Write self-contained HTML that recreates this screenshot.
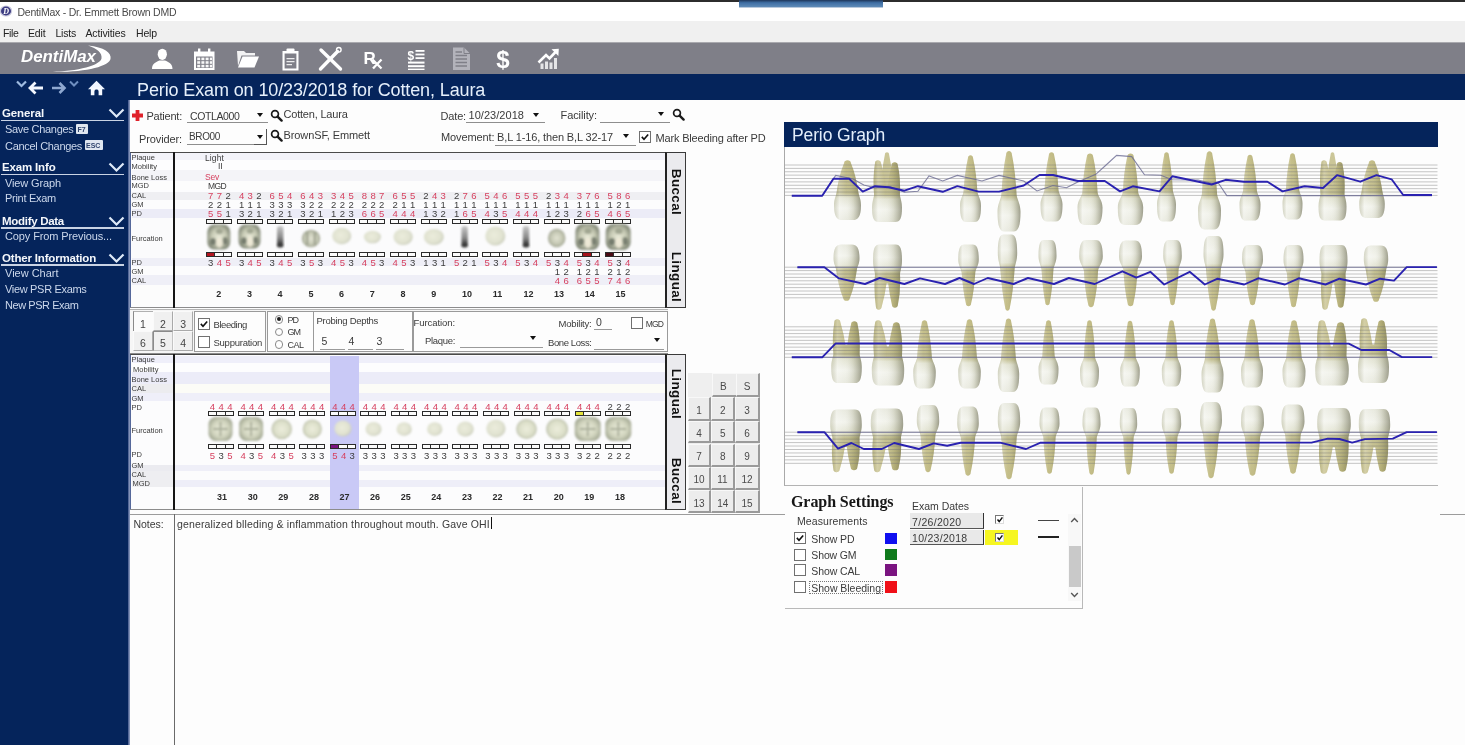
<!DOCTYPE html>
<html><head><meta charset="utf-8"><title>DentiMax - Perio Exam</title>
<style>
html,body{margin:0;padding:0;}
body{width:1465px;height:745px;overflow:hidden;background:#fff;font-family:"Liberation Sans",sans-serif;}
#wrap{position:absolute;left:-12px;top:-12px;width:1489px;height:769px;background:#fdfdfd;filter:blur(0.5px);}
.bleed{position:absolute;left:0;width:1489px;}
#app{position:absolute;left:12px;top:12px;width:1465px;height:745px;background:#fdfdfd;}
.a{position:absolute;}
.t{position:absolute;white-space:nowrap;}
.cb{position:absolute;width:11px;height:11px;border:1px solid #707070;background:#fff;box-sizing:content-box;}
.ul{position:absolute;height:1px;background:#8a8a8a;}
.gb{position:absolute;border:1px solid #9a9a9a;box-sizing:border-box;background:#fdfdfd;}
.arrow{position:absolute;width:0;height:0;border-left:3.5px solid transparent;border-right:3.5px solid transparent;border-top:4px solid #111;}
.nb{position:absolute;box-sizing:border-box;background:#ececec;border-right:2px solid #9a9a9a;border-bottom:2px solid #9a9a9a;border-top:1px solid #f8f8f8;border-left:1px solid #f8f8f8;}
</style></head><body><div id="wrap"><div class="bleed" style="top:0;height:14px;background:#2c2c2c"></div><div class="bleed" style="top:33px;height:22px;background:#f0f0f0"></div><div class="bleed" style="top:54px;height:32px;background:#7f7f88"></div><div class="bleed" style="top:86px;height:26px;background:#05245b"></div><div class="bleed" style="top:112px;height:657px;width:140px;background:#05245b"></div><div id="app">

<div class="a" id="titlebar" style="left:0;top:0;width:1465px;height:22px;background:#fff;"></div>
<div class="a" style="left:0;top:0;width:1465px;height:2px;background:#2c2c2c;"></div>
<div class="a" style="left:739px;top:0;width:144px;height:7px;background:linear-gradient(#1d3558 0%,#3f6fa5 40%,#5f8bb7 100%);border-bottom:1px solid #b9c9dc;"></div>
<div class="a" id="menubar" style="left:0;top:21px;width:1465px;height:22px;background:#f0f0f0;"></div>
<div class="a" id="toolbar" style="left:0;top:42px;width:1465px;height:32px;background:#7f7f88;border-top:1px solid #a9a9ae;box-sizing:border-box;"></div>
<div class="a" id="navband" style="left:0;top:74px;width:1465px;height:26px;background:#05245b;"></div>
<div class="a" id="sidebar" style="left:0;top:100px;width:128px;height:645px;background:#05245b;"></div>
<div class="a" id="content" style="left:128px;top:100px;width:1337px;height:645px;background:#fdfdfd;"></div>

<svg class="a" style="left:0;top:4px" width="13" height="14" viewBox="0 0 13 14"><ellipse cx="6" cy="7" rx="6.2" ry="5.6" fill="#c9c9dc"/><ellipse cx="6" cy="7" rx="5" ry="4.4" fill="#3c3c82"/><text x="6.2" y="10" font-size="8" font-weight="bold" font-style="italic" fill="#fff" text-anchor="middle" font-family="Liberation Serif">D</text></svg>
<div class="a" style="left:1px;top:119.7px;width:123px;height:1.5px;background:#c9d3e4;"></div>
<svg class="a" style="left:108px;top:107.2px" width="17" height="12" viewBox="0 0 17 12"><path d="M1.5 2.5 L8.5 9.5 L15.5 2.5" fill="none" stroke="#dfeaf8" stroke-width="2.2"/></svg>
<div class="a" style="left:76px;top:123.5px;width:12px;height:10px;background:#dfe6f0;border-radius:1px;"></div>
<div class="a" style="left:84.5px;top:140px;width:18px;height:10px;background:#dfe6f0;border-radius:1px;"></div>
<div class="a" style="left:1px;top:173.8px;width:123px;height:1.5px;background:#c9d3e4;"></div>
<svg class="a" style="left:108px;top:161.3px" width="17" height="12" viewBox="0 0 17 12"><path d="M1.5 2.5 L8.5 9.5 L15.5 2.5" fill="none" stroke="#dfeaf8" stroke-width="2.2"/></svg>
<div class="a" style="left:1px;top:227.0px;width:123px;height:1.5px;background:#c9d3e4;"></div>
<svg class="a" style="left:108px;top:214.5px" width="17" height="12" viewBox="0 0 17 12"><path d="M1.5 2.5 L8.5 9.5 L15.5 2.5" fill="none" stroke="#dfeaf8" stroke-width="2.2"/></svg>
<div class="a" style="left:1px;top:264.3px;width:123px;height:1.5px;background:#c9d3e4;"></div>
<svg class="a" style="left:108px;top:251.8px" width="17" height="12" viewBox="0 0 17 12"><path d="M1.5 2.5 L8.5 9.5 L15.5 2.5" fill="none" stroke="#dfeaf8" stroke-width="2.2"/></svg>
<svg class="a" style="left:14px;top:78px" width="100" height="22" viewBox="0 0 100 22">
<path d="M3 3.5 L7.5 8 L12 3.5" fill="none" stroke="#9fbbe0" stroke-width="2.2"/>
<path d="M29 10 H16.5 M21.5 4.5 L16 10 L21.5 15.5" fill="none" stroke="#f4f8ff" stroke-width="2.8"/>
<path d="M38 10 H50 M45.5 5 L50.5 10 L45.5 15" fill="none" stroke="#8fa8d0" stroke-width="2.6"/>
<path d="M56 3.5 L60 7.5 L64 3.5" fill="none" stroke="#6f8fc0" stroke-width="2"/>
<path d="M74 11.2 L82.5 2.8 L91 11.2 Z" fill="#eef4ff"/>
<path d="M76.8 9.5 H88.2 V17.2 H84.6 V13.4 a2.1 2.1 0 0 0 -4.2 0 V17.2 H76.8 Z" fill="#f6f9ff"/>
</svg>
<svg class="a" id="logo" style="left:15px;top:43px" width="105" height="31" viewBox="15 43 105 31">
<path d="M88 45.5 C104 47 112 53 110.5 59 C109 66.5 84 73 48 71.8 C80 71.5 100 65 101.5 58.5 C102.5 53 97 48.5 88 45.5 Z" fill="#fff"/>
<text x="21" y="62.3" font-family="Liberation Sans" font-weight="bold" font-style="italic" font-size="16.5" fill="#fff" textLength="75" lengthAdjust="spacingAndGlyphs">DentiMax</text>
</svg>
<svg class="a" id="tbicons" style="left:140px;top:43px" width="430" height="31" viewBox="140 43 430 31">
<g fill="#fff" stroke="none">
<!-- person -->
<ellipse cx="162.3" cy="54.3" rx="4.6" ry="5.6"/>
<path d="M152 69 C152 63.5 156 62 159.5 60.5 L165 60.5 C168.5 62 172.5 63.5 172.5 69 Z"/>
<!-- calendar -->
<path d="M194 51.5 H214.5 V70 H194 Z M196 56.5 V68 H212.5 V56.5 Z" fill-rule="evenodd"/>
<rect x="198" y="48.5" width="2.4" height="5"/><rect x="208" y="48.5" width="2.4" height="5"/>
<g opacity="0.95"><rect x="197.2" y="57.6" width="3" height="2.6"/><rect x="201.4" y="57.6" width="3" height="2.6"/><rect x="205.6" y="57.6" width="3" height="2.6"/><rect x="209.8" y="57.6" width="2.2" height="2.6"/>
<rect x="197.2" y="61.2" width="3" height="2.6"/><rect x="201.4" y="61.2" width="3" height="2.6"/><rect x="205.6" y="61.2" width="3" height="2.6"/><rect x="209.8" y="61.2" width="2.2" height="2.6"/>
<rect x="197.2" y="64.8" width="3" height="2.6"/><rect x="201.4" y="64.8" width="3" height="2.6"/><rect x="205.6" y="64.8" width="3" height="2.6"/><rect x="209.8" y="64.8" width="2.2" height="2.6"/></g>
<!-- folder -->
<path d="M237 51 H244 L246 53 H255 V55.5 H241.5 L238 66 Z" opacity="0.9"/>
<path d="M242.5 56.5 H259 L254.5 67.5 H238 Z"/>
<!-- clipboard -->
<path d="M282.5 51 H298.5 V70.5 H282.5 Z M284.6 53.5 V68.4 H296.4 V53.5 Z" fill-rule="evenodd"/>
<rect x="286.5" y="48.6" width="8" height="4" rx="1"/>
<path d="M286.5 58 H294.5 V59.3 H286.5 Z M286.5 61 H294.5 V62.3 H286.5 Z M286.5 64 H292 V65.3 H286.5 Z" opacity="0.85"/>
</g>
<!-- tools X -->
<g stroke="#fff" fill="none" stroke-linecap="round">
<path d="M321 50 L340.5 69" stroke-width="3.4"/>
<path d="M337.5 51.5 L320.5 69" stroke-width="3.4"/>
<circle cx="338.8" cy="49.8" r="2.3" stroke-width="1.4"/>
</g>
<!-- Rx -->
<text x="363.5" y="64" font-family="Liberation Sans" font-weight="bold" font-size="17" fill="#fff">R</text>
<path d="M372.5 59.5 L381.5 68.5 M381.5 59.5 L373 68.5" stroke="#fff" stroke-width="2.3" fill="none"/>
<!-- $ list -->
<text x="407.5" y="59.5" font-family="Liberation Sans" font-weight="bold" font-size="12" fill="#fff">$</text>
<g fill="#fff"><rect x="415.5" y="50" width="9" height="1.8"/><rect x="415.5" y="53.6" width="9" height="1.8"/><rect x="415.5" y="57.2" width="9" height="1.8"/>
<rect x="408" y="61.6" width="16.5" height="2"/><rect x="408" y="65.2" width="16.5" height="2"/><rect x="408" y="68.6" width="16.5" height="1.4"/></g>
<!-- document -->
<g opacity="0.5"><path d="M453 47.5 H464 L470 53.5 V70 H453 Z" fill="#e8e8ee"/>
<path d="M455.5 52 H462 M455.5 55.5 H467 M455.5 59 H467 M455.5 62.5 H467 M455.5 66 H467" stroke="#7f7f88" stroke-width="1.5"/><path d="M464 47.5 V53.5 H470" fill="none" stroke="#7f7f88" stroke-width="1"/></g>
<!-- dollar -->
<text x="496.3" y="68" font-family="Liberation Sans" font-weight="bold" font-size="24" fill="#fff">$</text>
<!-- chart -->
<g fill="#fff"><rect x="540.5" y="63.5" width="3" height="5.5" opacity=".8"/><rect x="545" y="61.5" width="3" height="7.5" opacity=".8"/><rect x="549.5" y="62.5" width="3" height="6.5" opacity=".8"/><rect x="554" y="58" width="3" height="11" opacity=".8"/></g>
<path d="M538.5 62.5 L546 55 L549.5 58.5 L556 51.5" fill="none" stroke="#fff" stroke-width="2.6"/>
<path d="M551.5 49.2 L558.8 48.8 L558.4 56 Z" fill="#fff"/>
</svg>
<svg class="a" style="left:131px;top:109px" width="13" height="13" viewBox="0 0 13 13"><path d="M4.6 1 H8.4 V4.6 H12 V8.4 H8.4 V12 H4.6 V8.4 H1 V4.6 H4.6 Z" fill="#e0222b"/></svg>
<div class="arrow" style="left:256.5px;top:113px;border-top-color:#111"></div>
<div class="ul" style="left:187px;top:122px;width:81px;background:#8e8e8e"></div>
<svg class="a" style="left:269.5px;top:109px" width="13" height="13" viewBox="0 0 13 13"><circle cx="5" cy="5" r="3.4" fill="#fdfdfd" stroke="#1a1a1a" stroke-width="1.7"/><path d="M7.6 7.6 L11.6 11.6" stroke="#1a1a1a" stroke-width="2.4" stroke-linecap="round"/></svg>
<div class="a" style="left:252px;top:128.5px;width:15px;height:16px;border-right:1.5px solid #555;border-bottom:1.5px solid #555;box-sizing:border-box;"></div>
<div class="arrow" style="left:256.5px;top:134.5px;border-top-color:#111"></div>
<div class="ul" style="left:187px;top:144px;width:67px;background:#8e8e8e"></div>
<svg class="a" style="left:269.5px;top:129px" width="13" height="13" viewBox="0 0 13 13"><circle cx="5" cy="5" r="3.4" fill="#fdfdfd" stroke="#1a1a1a" stroke-width="1.7"/><path d="M7.6 7.6 L11.6 11.6" stroke="#1a1a1a" stroke-width="2.4" stroke-linecap="round"/></svg>
<div class="arrow" style="left:532.5px;top:112.5px;border-top-color:#111"></div>
<div class="ul" style="left:466px;top:122px;width:79px;background:#8e8e8e"></div>
<div class="arrow" style="left:657.5px;top:112px;border-top-color:#111"></div>
<div class="ul" style="left:600px;top:122px;width:70px;background:#8e8e8e"></div>
<svg class="a" style="left:671.5px;top:108px" width="13" height="13" viewBox="0 0 13 13"><circle cx="5" cy="5" r="3.4" fill="#fdfdfd" stroke="#1a1a1a" stroke-width="1.7"/><path d="M7.6 7.6 L11.6 11.6" stroke="#1a1a1a" stroke-width="2.4" stroke-linecap="round"/></svg>
<div class="arrow" style="left:623.0px;top:134px;border-top-color:#111"></div>
<div class="ul" style="left:495px;top:144.5px;width:141px;background:#8e8e8e"></div>
<div class="cb" style="left:638.5px;top:131px;width:10px;height:10px"><svg width="10" height="10" viewBox="0 0 11 11" style="display:block"><path d="M2 5.4 L4.4 8 L9 2.8" fill="none" stroke="#111" stroke-width="1.8"/></svg></div>
<div class="a" style="left:129px;top:152px;width:537px;height:156px;background:#fcfcfe;border-top:1.5px solid #4a4a4a;border-bottom:1.5px solid #8c8c8c;border-left:2px solid #55689a;box-sizing:border-box;"></div>
<div class="a" style="left:173px;top:152px;width:2px;height:156px;background:#151515;"></div>
<div class="a" style="left:665px;top:152px;width:21px;height:156px;background:#ebebee;border:1.5px solid #3a3a3a;border-left:2px solid #222;box-sizing:border-box;"></div>
<div class="a" style="left:645.5px;top:184px;width:60px;height:16px;line-height:16px;text-align:center;font-weight:bold;font-size:13.5px;color:#111;transform:rotate(90deg);letter-spacing:0.35px;">Buccal</div>
<div class="a" style="left:645.5px;top:269px;width:60px;height:16px;line-height:16px;text-align:center;font-weight:bold;font-size:13.5px;color:#111;transform:rotate(90deg);letter-spacing:0.35px;">Lingual</div>
<div class="a" style="left:131.5px;top:153px;width:533.5px;height:7px;background:#f3f3f9"></div><div class="a" style="left:131.5px;top:160px;width:533.5px;height:10px;background:#fdfdfe"></div><div class="a" style="left:131.5px;top:170px;width:533.5px;height:11px;background:#f4f4f8"></div><div class="a" style="left:131.5px;top:181px;width:533.5px;height:9px;background:#fdfdfd"></div><div class="a" style="left:131.5px;top:192px;width:533.5px;height:8px;background:#efeff3"></div><div class="a" style="left:131.5px;top:200px;width:533.5px;height:9px;background:#fcfcfd"></div><div class="a" style="left:131.5px;top:209px;width:533.5px;height:9px;background:#ececf7"></div><div class="a" style="left:131.5px;top:218px;width:533.5px;height:40px;background:#fbfbfc"></div><div class="a" style="left:131.5px;top:258px;width:533.5px;height:8px;background:#efeff7"></div><div class="a" style="left:131.5px;top:266px;width:533.5px;height:9px;background:#fcfcfd"></div><div class="a" style="left:131.5px;top:275px;width:533.5px;height:10px;background:#efeff7"></div><div class="a" style="left:131.5px;top:285px;width:533.5px;height:21px;background:#fcfcfc"></div>
<div class="a" style="left:173px;top:152px;width:2px;height:156px;background:#151515;"></div>
<div class="a" style="left:206px;top:219px;width:26px;height:5px;background:#2b2b2b;"></div><div class="a" style="left:207px;top:220px;width:7px;height:3px;background:#fbfbfb;"></div><div class="a" style="left:215px;top:220px;width:8px;height:3px;background:#fbfbfb;"></div><div class="a" style="left:224px;top:220px;width:7px;height:3px;background:#fbfbfb;"></div>
<div class="a" style="left:206px;top:252px;width:26px;height:5px;background:#2b2b2b;"></div><div class="a" style="left:207px;top:253px;width:7px;height:3px;background:#b3141f;"></div><div class="a" style="left:215px;top:253px;width:8px;height:3px;background:#fbfbfb;"></div><div class="a" style="left:224px;top:253px;width:7px;height:3px;background:#fbfbfb;"></div>
<div class="a" style="left:237px;top:219px;width:26px;height:5px;background:#2b2b2b;"></div><div class="a" style="left:238px;top:220px;width:7px;height:3px;background:#fbfbfb;"></div><div class="a" style="left:246px;top:220px;width:8px;height:3px;background:#fbfbfb;"></div><div class="a" style="left:255px;top:220px;width:7px;height:3px;background:#fbfbfb;"></div>
<div class="a" style="left:237px;top:252px;width:26px;height:5px;background:#2b2b2b;"></div><div class="a" style="left:238px;top:253px;width:7px;height:3px;background:#fbfbfb;"></div><div class="a" style="left:246px;top:253px;width:8px;height:3px;background:#fbfbfb;"></div><div class="a" style="left:255px;top:253px;width:7px;height:3px;background:#fbfbfb;"></div>
<div class="a" style="left:267px;top:219px;width:26px;height:5px;background:#2b2b2b;"></div><div class="a" style="left:268px;top:220px;width:7px;height:3px;background:#fbfbfb;"></div><div class="a" style="left:276px;top:220px;width:8px;height:3px;background:#fbfbfb;"></div><div class="a" style="left:285px;top:220px;width:7px;height:3px;background:#fbfbfb;"></div>
<div class="a" style="left:267px;top:252px;width:26px;height:5px;background:#2b2b2b;"></div><div class="a" style="left:268px;top:253px;width:7px;height:3px;background:#fbfbfb;"></div><div class="a" style="left:276px;top:253px;width:8px;height:3px;background:#fbfbfb;"></div><div class="a" style="left:285px;top:253px;width:7px;height:3px;background:#fbfbfb;"></div>
<div class="a" style="left:298px;top:219px;width:26px;height:5px;background:#2b2b2b;"></div><div class="a" style="left:299px;top:220px;width:7px;height:3px;background:#fbfbfb;"></div><div class="a" style="left:307px;top:220px;width:8px;height:3px;background:#fbfbfb;"></div><div class="a" style="left:316px;top:220px;width:7px;height:3px;background:#fbfbfb;"></div>
<div class="a" style="left:298px;top:252px;width:26px;height:5px;background:#2b2b2b;"></div><div class="a" style="left:299px;top:253px;width:7px;height:3px;background:#fbfbfb;"></div><div class="a" style="left:307px;top:253px;width:8px;height:3px;background:#fbfbfb;"></div><div class="a" style="left:316px;top:253px;width:7px;height:3px;background:#fbfbfb;"></div>
<div class="a" style="left:329px;top:219px;width:26px;height:5px;background:#2b2b2b;"></div><div class="a" style="left:330px;top:220px;width:7px;height:3px;background:#fbfbfb;"></div><div class="a" style="left:338px;top:220px;width:8px;height:3px;background:#fbfbfb;"></div><div class="a" style="left:347px;top:220px;width:7px;height:3px;background:#fbfbfb;"></div>
<div class="a" style="left:329px;top:252px;width:26px;height:5px;background:#2b2b2b;"></div><div class="a" style="left:330px;top:253px;width:7px;height:3px;background:#fbfbfb;"></div><div class="a" style="left:338px;top:253px;width:8px;height:3px;background:#fbfbfb;"></div><div class="a" style="left:347px;top:253px;width:7px;height:3px;background:#fbfbfb;"></div>
<div class="a" style="left:359px;top:219px;width:26px;height:5px;background:#2b2b2b;"></div><div class="a" style="left:360px;top:220px;width:7px;height:3px;background:#fbfbfb;"></div><div class="a" style="left:368px;top:220px;width:8px;height:3px;background:#fbfbfb;"></div><div class="a" style="left:377px;top:220px;width:7px;height:3px;background:#fbfbfb;"></div>
<div class="a" style="left:359px;top:252px;width:26px;height:5px;background:#2b2b2b;"></div><div class="a" style="left:360px;top:253px;width:7px;height:3px;background:#fbfbfb;"></div><div class="a" style="left:368px;top:253px;width:8px;height:3px;background:#fbfbfb;"></div><div class="a" style="left:377px;top:253px;width:7px;height:3px;background:#fbfbfb;"></div>
<div class="a" style="left:390px;top:219px;width:26px;height:5px;background:#2b2b2b;"></div><div class="a" style="left:391px;top:220px;width:7px;height:3px;background:#fbfbfb;"></div><div class="a" style="left:399px;top:220px;width:8px;height:3px;background:#fbfbfb;"></div><div class="a" style="left:408px;top:220px;width:7px;height:3px;background:#fbfbfb;"></div>
<div class="a" style="left:390px;top:252px;width:26px;height:5px;background:#2b2b2b;"></div><div class="a" style="left:391px;top:253px;width:7px;height:3px;background:#fbfbfb;"></div><div class="a" style="left:399px;top:253px;width:8px;height:3px;background:#fbfbfb;"></div><div class="a" style="left:408px;top:253px;width:7px;height:3px;background:#fbfbfb;"></div>
<div class="a" style="left:421px;top:219px;width:26px;height:5px;background:#2b2b2b;"></div><div class="a" style="left:422px;top:220px;width:7px;height:3px;background:#fbfbfb;"></div><div class="a" style="left:430px;top:220px;width:8px;height:3px;background:#fbfbfb;"></div><div class="a" style="left:439px;top:220px;width:7px;height:3px;background:#fbfbfb;"></div>
<div class="a" style="left:421px;top:252px;width:26px;height:5px;background:#2b2b2b;"></div><div class="a" style="left:422px;top:253px;width:7px;height:3px;background:#fbfbfb;"></div><div class="a" style="left:430px;top:253px;width:8px;height:3px;background:#fbfbfb;"></div><div class="a" style="left:439px;top:253px;width:7px;height:3px;background:#fbfbfb;"></div>
<div class="a" style="left:452px;top:219px;width:26px;height:5px;background:#2b2b2b;"></div><div class="a" style="left:453px;top:220px;width:7px;height:3px;background:#fbfbfb;"></div><div class="a" style="left:461px;top:220px;width:8px;height:3px;background:#fbfbfb;"></div><div class="a" style="left:470px;top:220px;width:7px;height:3px;background:#fbfbfb;"></div>
<div class="a" style="left:452px;top:252px;width:26px;height:5px;background:#2b2b2b;"></div><div class="a" style="left:453px;top:253px;width:7px;height:3px;background:#fbfbfb;"></div><div class="a" style="left:461px;top:253px;width:8px;height:3px;background:#fbfbfb;"></div><div class="a" style="left:470px;top:253px;width:7px;height:3px;background:#fbfbfb;"></div>
<div class="a" style="left:482px;top:219px;width:26px;height:5px;background:#2b2b2b;"></div><div class="a" style="left:483px;top:220px;width:7px;height:3px;background:#fbfbfb;"></div><div class="a" style="left:491px;top:220px;width:8px;height:3px;background:#fbfbfb;"></div><div class="a" style="left:500px;top:220px;width:7px;height:3px;background:#fbfbfb;"></div>
<div class="a" style="left:482px;top:252px;width:26px;height:5px;background:#2b2b2b;"></div><div class="a" style="left:483px;top:253px;width:7px;height:3px;background:#fbfbfb;"></div><div class="a" style="left:491px;top:253px;width:8px;height:3px;background:#fbfbfb;"></div><div class="a" style="left:500px;top:253px;width:7px;height:3px;background:#fbfbfb;"></div>
<div class="a" style="left:513px;top:219px;width:26px;height:5px;background:#2b2b2b;"></div><div class="a" style="left:514px;top:220px;width:7px;height:3px;background:#fbfbfb;"></div><div class="a" style="left:522px;top:220px;width:8px;height:3px;background:#fbfbfb;"></div><div class="a" style="left:531px;top:220px;width:7px;height:3px;background:#fbfbfb;"></div>
<div class="a" style="left:513px;top:252px;width:26px;height:5px;background:#2b2b2b;"></div><div class="a" style="left:514px;top:253px;width:7px;height:3px;background:#fbfbfb;"></div><div class="a" style="left:522px;top:253px;width:8px;height:3px;background:#fbfbfb;"></div><div class="a" style="left:531px;top:253px;width:7px;height:3px;background:#fbfbfb;"></div>
<div class="a" style="left:544px;top:219px;width:26px;height:5px;background:#2b2b2b;"></div><div class="a" style="left:545px;top:220px;width:7px;height:3px;background:#fbfbfb;"></div><div class="a" style="left:553px;top:220px;width:8px;height:3px;background:#fbfbfb;"></div><div class="a" style="left:562px;top:220px;width:7px;height:3px;background:#fbfbfb;"></div>
<div class="a" style="left:544px;top:252px;width:26px;height:5px;background:#2b2b2b;"></div><div class="a" style="left:545px;top:253px;width:7px;height:3px;background:#fbfbfb;"></div><div class="a" style="left:553px;top:253px;width:8px;height:3px;background:#fbfbfb;"></div><div class="a" style="left:562px;top:253px;width:7px;height:3px;background:#fbfbfb;"></div>
<div class="a" style="left:574px;top:219px;width:26px;height:5px;background:#2b2b2b;"></div><div class="a" style="left:575px;top:220px;width:7px;height:3px;background:#fbfbfb;"></div><div class="a" style="left:583px;top:220px;width:8px;height:3px;background:#fbfbfb;"></div><div class="a" style="left:592px;top:220px;width:7px;height:3px;background:#fbfbfb;"></div>
<div class="a" style="left:574px;top:252px;width:26px;height:5px;background:#2b2b2b;"></div><div class="a" style="left:575px;top:253px;width:7px;height:3px;background:#fbfbfb;"></div><div class="a" style="left:583px;top:253px;width:8px;height:3px;background:#a3121c;"></div><div class="a" style="left:592px;top:253px;width:7px;height:3px;background:#fbfbfb;"></div>
<div class="a" style="left:605px;top:219px;width:26px;height:5px;background:#2b2b2b;"></div><div class="a" style="left:606px;top:220px;width:7px;height:3px;background:#fbfbfb;"></div><div class="a" style="left:614px;top:220px;width:8px;height:3px;background:#fbfbfb;"></div><div class="a" style="left:623px;top:220px;width:7px;height:3px;background:#fbfbfb;"></div>
<div class="a" style="left:605px;top:252px;width:26px;height:5px;background:#2b2b2b;"></div><div class="a" style="left:606px;top:253px;width:7px;height:3px;background:#4a0a14;"></div><div class="a" style="left:614px;top:253px;width:8px;height:3px;background:#fbfbfb;"></div><div class="a" style="left:623px;top:253px;width:7px;height:3px;background:#fbfbfb;"></div>
<div class="a" style="left:130px;top:309px;width:538px;height:45px;background:#f6f6f6;border-top:1px solid #b5b5b5;border-bottom:1.5px solid #8c8c8c;box-sizing:border-box;"></div>
<div class="a" style="left:132.5px;top:311px;width:20.2px;height:20px;box-sizing:border-box;background:#fbfbfb;border-left:1px solid #8a8a8a;border-top:1px solid #b0b0b0;border-right:none;border-bottom:none;"></div>
<div class="a" style="left:152.7px;top:311px;width:20.2px;height:20px;box-sizing:border-box;background:#f0f0f0;border-right:1.5px solid #a9a9a9;border-bottom:1.5px solid #a9a9a9;border-top:1px solid #fafafa;border-left:1px solid #fafafa;"></div>
<div class="a" style="left:172.9px;top:311px;width:20.2px;height:20px;box-sizing:border-box;background:#f0f0f0;border-right:1.5px solid #a9a9a9;border-bottom:1.5px solid #a9a9a9;border-top:1px solid #fafafa;border-left:1px solid #fafafa;"></div>
<div class="a" style="left:132.5px;top:331px;width:20.2px;height:20px;box-sizing:border-box;background:#f0f0f0;border-right:1.5px solid #a9a9a9;border-bottom:1.5px solid #a9a9a9;border-top:1px solid #fafafa;border-left:1px solid #fafafa;"></div>
<div class="a" style="left:152.7px;top:331px;width:20.2px;height:20px;box-sizing:border-box;background:#f0f0f0;border-left:1px solid #8a8a8a;border-top:1px solid #8a8a8a;border-right:1px solid #c4c4c4;border-bottom:1px solid #c4c4c4;"></div>
<div class="a" style="left:172.9px;top:331px;width:20.2px;height:20px;box-sizing:border-box;background:#f0f0f0;border-right:1.5px solid #a9a9a9;border-bottom:1.5px solid #a9a9a9;border-top:1px solid #fafafa;border-left:1px solid #fafafa;"></div>
<div class="gb" style="left:194px;top:311px;width:72px;height:41px;"></div>
<div class="cb" style="left:197.5px;top:318px;width:10px;height:10px"><svg width="10" height="10" viewBox="0 0 11 11" style="display:block"><path d="M2 5.4 L4.4 8 L9 2.8" fill="none" stroke="#111" stroke-width="1.8"/></svg></div>
<div class="cb" style="left:197.5px;top:335.5px;width:10px;height:10px"></div>
<div class="gb" style="left:267px;top:311px;width:46.5px;height:41px;"></div>
<div class="a" style="left:274.5px;top:315px;width:6.5px;height:6.5px;border:1px solid #8a8a8a;border-radius:50%;background:#fff;"></div>
<div class="a" style="left:276.7px;top:317.2px;width:4px;height:4px;border-radius:50%;background:#222;"></div>
<div class="a" style="left:274.5px;top:327.6px;width:6.5px;height:6.5px;border:1px solid #8a8a8a;border-radius:50%;background:#fff;"></div>
<div class="a" style="left:274.5px;top:340px;width:6.5px;height:6.5px;border:1px solid #8a8a8a;border-radius:50%;background:#fff;"></div>
<div class="gb" style="left:313px;top:311px;width:100px;height:41px;"></div>
<div class="ul" style="left:319.5px;top:348.5px;width:25.5px;background:#9a9a9a"></div>
<div class="ul" style="left:348px;top:348.5px;width:25px;background:#9a9a9a"></div>
<div class="ul" style="left:376px;top:348.5px;width:27.5px;background:#9a9a9a"></div>
<div class="gb" style="left:412.5px;top:311px;width:255px;height:41px;"></div>
<div class="ul" style="left:459.5px;top:347px;width:83.5px;background:#9a9a9a"></div>
<div class="arrow" style="left:530.0px;top:336px;border-top-color:#111"></div>
<div class="ul" style="left:593.5px;top:329px;width:18.5px;background:#9a9a9a"></div>
<div class="cb" style="left:630.5px;top:317.3px;width:10px;height:10px"></div>
<div class="ul" style="left:593.5px;top:348.5px;width:70.5px;background:#9a9a9a"></div>
<div class="arrow" style="left:653.5px;top:338px;border-top-color:#111"></div>
<div class="a" style="left:129px;top:354px;width:537px;height:156px;background:#fcfcfe;border-top:1.5px solid #4a4a4a;border-bottom:1.5px solid #8c8c8c;border-left:2px solid #55689a;box-sizing:border-box;"></div>
<div class="a" style="left:173px;top:354px;width:2px;height:156px;background:#151515;"></div>
<div class="a" style="left:665px;top:354px;width:21px;height:156px;background:#ebebee;border:1.5px solid #3a3a3a;border-left:2px solid #222;box-sizing:border-box;"></div>
<div class="a" style="left:645.5px;top:386px;width:60px;height:16px;line-height:16px;text-align:center;font-weight:bold;font-size:13.5px;color:#111;transform:rotate(90deg);letter-spacing:0.35px;">Lingual</div>
<div class="a" style="left:645.5px;top:472.5px;width:60px;height:16px;line-height:16px;text-align:center;font-weight:bold;font-size:13.5px;color:#111;transform:rotate(90deg);letter-spacing:0.35px;">Buccal</div>
<div class="a" style="left:131.5px;top:355.5px;width:533.5px;height:7.0px;background:#efeffa"></div><div class="a" style="left:131.5px;top:362.5px;width:533.5px;height:9.5px;background:#fdfdfe"></div><div class="a" style="left:131.5px;top:372px;width:533.5px;height:11.5px;background:#ececf8"></div><div class="a" style="left:131.5px;top:383.5px;width:533.5px;height:9.0px;background:#fcfcf7"></div><div class="a" style="left:131.5px;top:392.5px;width:533.5px;height:8.0px;background:#efeff9"></div><div class="a" style="left:131.5px;top:400.5px;width:533.5px;height:64.0px;background:#fcfcfd"></div><div class="a" style="left:131.5px;top:464.5px;width:533.5px;height:6.0px;background:#efeff8"></div><div class="a" style="left:131.5px;top:470.5px;width:533.5px;height:9.0px;background:#fcfcfd"></div><div class="a" style="left:131.5px;top:479.5px;width:533.5px;height:7.0px;background:#eeeef8"></div><div class="a" style="left:131.5px;top:486.5px;width:533.5px;height:22.0px;background:#fcfcfd"></div>
<div class="a" style="left:131.5px;top:383.5px;width:41px;height:9.0px;background:#ececef"></div><div class="a" style="left:131.5px;top:464.5px;width:41px;height:6.0px;background:#ebebf0"></div><div class="a" style="left:131.5px;top:470.5px;width:41px;height:16.0px;background:#eeeef1"></div>
<div class="a" style="left:330px;top:355.5px;width:29px;height:153px;background:#c9c9f6;"></div>
<div class="a" style="left:173px;top:354px;width:2px;height:156px;background:#151515;"></div>
<div class="a" style="left:208px;top:411px;width:26px;height:5px;background:#2b2b2b;"></div><div class="a" style="left:209px;top:412px;width:7px;height:3px;background:#fbfbfb;"></div><div class="a" style="left:217px;top:412px;width:8px;height:3px;background:#fbfbfb;"></div><div class="a" style="left:226px;top:412px;width:7px;height:3px;background:#fbfbfb;"></div>
<div class="a" style="left:208px;top:444px;width:26px;height:5px;background:#2b2b2b;"></div><div class="a" style="left:209px;top:445px;width:7px;height:3px;background:#fbfbfb;"></div><div class="a" style="left:217px;top:445px;width:8px;height:3px;background:#fbfbfb;"></div><div class="a" style="left:226px;top:445px;width:7px;height:3px;background:#fbfbfb;"></div>
<div class="a" style="left:238px;top:411px;width:26px;height:5px;background:#2b2b2b;"></div><div class="a" style="left:239px;top:412px;width:7px;height:3px;background:#fbfbfb;"></div><div class="a" style="left:247px;top:412px;width:8px;height:3px;background:#fbfbfb;"></div><div class="a" style="left:256px;top:412px;width:7px;height:3px;background:#fbfbfb;"></div>
<div class="a" style="left:238px;top:444px;width:26px;height:5px;background:#2b2b2b;"></div><div class="a" style="left:239px;top:445px;width:7px;height:3px;background:#fbfbfb;"></div><div class="a" style="left:247px;top:445px;width:8px;height:3px;background:#fbfbfb;"></div><div class="a" style="left:256px;top:445px;width:7px;height:3px;background:#fbfbfb;"></div>
<div class="a" style="left:269px;top:411px;width:26px;height:5px;background:#2b2b2b;"></div><div class="a" style="left:270px;top:412px;width:7px;height:3px;background:#fbfbfb;"></div><div class="a" style="left:278px;top:412px;width:8px;height:3px;background:#fbfbfb;"></div><div class="a" style="left:287px;top:412px;width:7px;height:3px;background:#fbfbfb;"></div>
<div class="a" style="left:269px;top:444px;width:26px;height:5px;background:#2b2b2b;"></div><div class="a" style="left:270px;top:445px;width:7px;height:3px;background:#fbfbfb;"></div><div class="a" style="left:278px;top:445px;width:8px;height:3px;background:#fbfbfb;"></div><div class="a" style="left:287px;top:445px;width:7px;height:3px;background:#fbfbfb;"></div>
<div class="a" style="left:299px;top:411px;width:26px;height:5px;background:#2b2b2b;"></div><div class="a" style="left:300px;top:412px;width:7px;height:3px;background:#fbfbfb;"></div><div class="a" style="left:308px;top:412px;width:8px;height:3px;background:#fbfbfb;"></div><div class="a" style="left:317px;top:412px;width:7px;height:3px;background:#fbfbfb;"></div>
<div class="a" style="left:299px;top:444px;width:26px;height:5px;background:#2b2b2b;"></div><div class="a" style="left:300px;top:445px;width:7px;height:3px;background:#fbfbfb;"></div><div class="a" style="left:308px;top:445px;width:8px;height:3px;background:#fbfbfb;"></div><div class="a" style="left:317px;top:445px;width:7px;height:3px;background:#fbfbfb;"></div>
<div class="a" style="left:330px;top:411px;width:26px;height:5px;background:#2b2b2b;"></div><div class="a" style="left:331px;top:412px;width:7px;height:3px;background:#fbfbfb;"></div><div class="a" style="left:339px;top:412px;width:8px;height:3px;background:#fbfbfb;"></div><div class="a" style="left:348px;top:412px;width:7px;height:3px;background:#fbfbfb;"></div>
<div class="a" style="left:330px;top:444px;width:26px;height:5px;background:#2b2b2b;"></div><div class="a" style="left:331px;top:445px;width:7px;height:3px;background:#7a1280;"></div><div class="a" style="left:339px;top:445px;width:8px;height:3px;background:#fbfbfb;"></div><div class="a" style="left:348px;top:445px;width:7px;height:3px;background:#fbfbfb;"></div>
<div class="a" style="left:360px;top:411px;width:26px;height:5px;background:#2b2b2b;"></div><div class="a" style="left:361px;top:412px;width:7px;height:3px;background:#fbfbfb;"></div><div class="a" style="left:369px;top:412px;width:8px;height:3px;background:#fbfbfb;"></div><div class="a" style="left:378px;top:412px;width:7px;height:3px;background:#fbfbfb;"></div>
<div class="a" style="left:360px;top:444px;width:26px;height:5px;background:#2b2b2b;"></div><div class="a" style="left:361px;top:445px;width:7px;height:3px;background:#fbfbfb;"></div><div class="a" style="left:369px;top:445px;width:8px;height:3px;background:#fbfbfb;"></div><div class="a" style="left:378px;top:445px;width:7px;height:3px;background:#fbfbfb;"></div>
<div class="a" style="left:391px;top:411px;width:26px;height:5px;background:#2b2b2b;"></div><div class="a" style="left:392px;top:412px;width:7px;height:3px;background:#fbfbfb;"></div><div class="a" style="left:400px;top:412px;width:8px;height:3px;background:#fbfbfb;"></div><div class="a" style="left:409px;top:412px;width:7px;height:3px;background:#fbfbfb;"></div>
<div class="a" style="left:391px;top:444px;width:26px;height:5px;background:#2b2b2b;"></div><div class="a" style="left:392px;top:445px;width:7px;height:3px;background:#fbfbfb;"></div><div class="a" style="left:400px;top:445px;width:8px;height:3px;background:#fbfbfb;"></div><div class="a" style="left:409px;top:445px;width:7px;height:3px;background:#fbfbfb;"></div>
<div class="a" style="left:422px;top:411px;width:26px;height:5px;background:#2b2b2b;"></div><div class="a" style="left:423px;top:412px;width:7px;height:3px;background:#fbfbfb;"></div><div class="a" style="left:431px;top:412px;width:8px;height:3px;background:#fbfbfb;"></div><div class="a" style="left:440px;top:412px;width:7px;height:3px;background:#fbfbfb;"></div>
<div class="a" style="left:422px;top:444px;width:26px;height:5px;background:#2b2b2b;"></div><div class="a" style="left:423px;top:445px;width:7px;height:3px;background:#fbfbfb;"></div><div class="a" style="left:431px;top:445px;width:8px;height:3px;background:#fbfbfb;"></div><div class="a" style="left:440px;top:445px;width:7px;height:3px;background:#fbfbfb;"></div>
<div class="a" style="left:452px;top:411px;width:26px;height:5px;background:#2b2b2b;"></div><div class="a" style="left:453px;top:412px;width:7px;height:3px;background:#fbfbfb;"></div><div class="a" style="left:461px;top:412px;width:8px;height:3px;background:#fbfbfb;"></div><div class="a" style="left:470px;top:412px;width:7px;height:3px;background:#fbfbfb;"></div>
<div class="a" style="left:452px;top:444px;width:26px;height:5px;background:#2b2b2b;"></div><div class="a" style="left:453px;top:445px;width:7px;height:3px;background:#fbfbfb;"></div><div class="a" style="left:461px;top:445px;width:8px;height:3px;background:#fbfbfb;"></div><div class="a" style="left:470px;top:445px;width:7px;height:3px;background:#fbfbfb;"></div>
<div class="a" style="left:483px;top:411px;width:26px;height:5px;background:#2b2b2b;"></div><div class="a" style="left:484px;top:412px;width:7px;height:3px;background:#fbfbfb;"></div><div class="a" style="left:492px;top:412px;width:8px;height:3px;background:#fbfbfb;"></div><div class="a" style="left:501px;top:412px;width:7px;height:3px;background:#fbfbfb;"></div>
<div class="a" style="left:483px;top:444px;width:26px;height:5px;background:#2b2b2b;"></div><div class="a" style="left:484px;top:445px;width:7px;height:3px;background:#fbfbfb;"></div><div class="a" style="left:492px;top:445px;width:8px;height:3px;background:#fbfbfb;"></div><div class="a" style="left:501px;top:445px;width:7px;height:3px;background:#fbfbfb;"></div>
<div class="a" style="left:514px;top:411px;width:26px;height:5px;background:#2b2b2b;"></div><div class="a" style="left:515px;top:412px;width:7px;height:3px;background:#fbfbfb;"></div><div class="a" style="left:523px;top:412px;width:8px;height:3px;background:#fbfbfb;"></div><div class="a" style="left:532px;top:412px;width:7px;height:3px;background:#fbfbfb;"></div>
<div class="a" style="left:514px;top:444px;width:26px;height:5px;background:#2b2b2b;"></div><div class="a" style="left:515px;top:445px;width:7px;height:3px;background:#fbfbfb;"></div><div class="a" style="left:523px;top:445px;width:8px;height:3px;background:#fbfbfb;"></div><div class="a" style="left:532px;top:445px;width:7px;height:3px;background:#fbfbfb;"></div>
<div class="a" style="left:544px;top:411px;width:26px;height:5px;background:#2b2b2b;"></div><div class="a" style="left:545px;top:412px;width:7px;height:3px;background:#fbfbfb;"></div><div class="a" style="left:553px;top:412px;width:8px;height:3px;background:#fbfbfb;"></div><div class="a" style="left:562px;top:412px;width:7px;height:3px;background:#fbfbfb;"></div>
<div class="a" style="left:544px;top:444px;width:26px;height:5px;background:#2b2b2b;"></div><div class="a" style="left:545px;top:445px;width:7px;height:3px;background:#fbfbfb;"></div><div class="a" style="left:553px;top:445px;width:8px;height:3px;background:#fbfbfb;"></div><div class="a" style="left:562px;top:445px;width:7px;height:3px;background:#fbfbfb;"></div>
<div class="a" style="left:575px;top:411px;width:26px;height:5px;background:#2b2b2b;"></div><div class="a" style="left:576px;top:412px;width:7px;height:3px;background:#e6e63c;"></div><div class="a" style="left:584px;top:412px;width:8px;height:3px;background:#fbfbfb;"></div><div class="a" style="left:593px;top:412px;width:7px;height:3px;background:#fbfbfb;"></div>
<div class="a" style="left:575px;top:444px;width:26px;height:5px;background:#2b2b2b;"></div><div class="a" style="left:576px;top:445px;width:7px;height:3px;background:#fbfbfb;"></div><div class="a" style="left:584px;top:445px;width:8px;height:3px;background:#fbfbfb;"></div><div class="a" style="left:593px;top:445px;width:7px;height:3px;background:#fbfbfb;"></div>
<div class="a" style="left:605px;top:411px;width:26px;height:5px;background:#2b2b2b;"></div><div class="a" style="left:606px;top:412px;width:7px;height:3px;background:#fbfbfb;"></div><div class="a" style="left:614px;top:412px;width:8px;height:3px;background:#fbfbfb;"></div><div class="a" style="left:623px;top:412px;width:7px;height:3px;background:#fbfbfb;"></div>
<div class="a" style="left:605px;top:444px;width:26px;height:5px;background:#2b2b2b;"></div><div class="a" style="left:606px;top:445px;width:7px;height:3px;background:#fbfbfb;"></div><div class="a" style="left:614px;top:445px;width:8px;height:3px;background:#fbfbfb;"></div><div class="a" style="left:623px;top:445px;width:7px;height:3px;background:#fbfbfb;"></div>
<div class="a" style="left:130px;top:514px;width:655px;height:1px;background:#9c9c9c;"></div>
<div class="a" style="left:173.5px;top:514px;width:1.3px;height:231px;background:#6a6a6a;"></div>
<div class="a" style="left:128px;top:100px;width:2px;height:645px;background:linear-gradient(90deg,#3d5288,#9aa7c6);"></div>
<div class="a" style="left:491px;top:517px;width:1px;height:12px;background:#111;"></div>
<div class="a" style="left:688px;top:373px;width:72px;height:140px;background:#ececec;"></div>
<div class="nb" style="left:711.5px;top:373px;width:24px;height:24px;border-right:none;"></div>
<div class="nb" style="left:735.5px;top:373px;width:24px;height:24px;"></div>
<div class="a" style="left:688px;top:373px;width:24px;height:24px;background:#efefef;"></div>
<div class="nb" style="left:688px;top:397px;width:23px;height:23.80000000000001px;"></div>
<div class="nb" style="left:711px;top:397px;width:24px;height:23.80000000000001px;"></div>
<div class="nb" style="left:735px;top:397px;width:25px;height:23.80000000000001px;"></div>
<div class="nb" style="left:688px;top:420.8px;width:23px;height:22.69999999999999px;"></div>
<div class="nb" style="left:711px;top:420.8px;width:24px;height:22.69999999999999px;"></div>
<div class="nb" style="left:735px;top:420.8px;width:25px;height:22.69999999999999px;"></div>
<div class="nb" style="left:688px;top:443.5px;width:23px;height:23.0px;"></div>
<div class="nb" style="left:711px;top:443.5px;width:24px;height:23.0px;"></div>
<div class="nb" style="left:735px;top:443.5px;width:25px;height:23.0px;"></div>
<div class="nb" style="left:688px;top:466.5px;width:23px;height:23.0px;"></div>
<div class="nb" style="left:711px;top:466.5px;width:24px;height:23.0px;"></div>
<div class="nb" style="left:735px;top:466.5px;width:25px;height:23.0px;"></div>
<div class="nb" style="left:688px;top:489.5px;width:23px;height:23.5px;"></div>
<div class="nb" style="left:711px;top:489.5px;width:24px;height:23.5px;"></div>
<div class="nb" style="left:735px;top:489.5px;width:25px;height:23.5px;"></div>
<svg class="a" id="occl" style="left:175px;top:150px" width="490" height="360" viewBox="175 150 490 360">
<defs>
<filter id="b1" x="-20%" y="-20%" width="140%" height="140%"><feGaussianBlur stdDeviation="1.1"/></filter>
<filter id="b2" x="-20%" y="-20%" width="140%" height="140%"><feGaussianBlur stdDeviation="1.6"/></filter>
<radialGradient id="gMol" cx="50%" cy="50%" r="55%"><stop offset="0" stop-color="#e9ead8"/><stop offset="0.55" stop-color="#c9ccb6"/><stop offset="1" stop-color="#7f8574"/></radialGradient>
<radialGradient id="gMolL" cx="50%" cy="50%" r="55%"><stop offset="0" stop-color="#e9ebd9"/><stop offset="0.6" stop-color="#d3d6c0"/><stop offset="1" stop-color="#a5aa95"/></radialGradient>
<radialGradient id="gPreL" cx="50%" cy="50%" r="55%"><stop offset="0" stop-color="#eceddc"/><stop offset="0.65" stop-color="#dcdfc9"/><stop offset="1" stop-color="#b4b8a4"/></radialGradient>
<radialGradient id="gPre" cx="50%" cy="50%" r="55%"><stop offset="0" stop-color="#e2e3d2"/><stop offset="0.6" stop-color="#c5c8b4"/><stop offset="1" stop-color="#9a9e8c"/></radialGradient>
<radialGradient id="gAnt" cx="45%" cy="45%" r="60%"><stop offset="0" stop-color="#ebecdc"/><stop offset="0.7" stop-color="#e0e2d0"/><stop offset="1" stop-color="#c4c7b6"/></radialGradient>
<linearGradient id="gImp" x1="0" y1="0" x2="0" y2="1"><stop offset="0" stop-color="#c9c9c9"/><stop offset="0.6" stop-color="#8a8a8a"/><stop offset="1" stop-color="#3a3a3a"/></linearGradient>
</defs>
<g filter="url(#b1)"><rect x="207.3" y="224.5" width="23.0" height="25.0" rx="7.13" ry="7.75" fill="url(#gMol)"/><ellipse cx="213.05" cy="241.375" rx="2.875" ry="3.5000000000000004" fill="#5c6458" opacity="0.75"/><ellipse cx="225.125" cy="240.75" rx="2.53" ry="3.75" fill="#5c6458" opacity="0.7"/><ellipse cx="219.375" cy="231.375" rx="3.4499999999999997" ry="2.75" fill="#8d937f" opacity="0.7"/><ellipse cx="219.375" cy="242.625" rx="3.22" ry="5.0" fill="#f0ead8" opacity="0.9"/></g>
<g filter="url(#b1)"><rect x="238.5" y="224.5" width="22" height="24" rx="6.82" ry="7.4399999999999995" fill="url(#gMol)"/><ellipse cx="244.0" cy="240.7" rx="2.75" ry="3.3600000000000003" fill="#5c6458" opacity="0.75"/><ellipse cx="255.55" cy="240.1" rx="2.42" ry="3.5999999999999996" fill="#5c6458" opacity="0.7"/><ellipse cx="250.05" cy="231.1" rx="3.3" ry="2.64" fill="#8d937f" opacity="0.7"/><ellipse cx="250.05" cy="241.9" rx="3.08" ry="4.800000000000001" fill="#f0ead8" opacity="0.9"/></g>
<g filter="url(#b1)"><rect x="277.0" y="226" width="6.4" height="19" rx="2.5" fill="url(#gImp)"/><ellipse cx="280.2" cy="245" rx="3.4" ry="2.6" fill="#3c3c3c"/></g>
<ellipse filter="url(#b1)" cx="311.0" cy="238.5" rx="9.2" ry="8.8" fill="url(#gPre)"/>
<path filter="url(#b1)" d="M307.3 232 V245 M314.7 232 V245" stroke="#8c907e" stroke-width="1.6" opacity=".8"/>
<ellipse filter="url(#b1)" cx="341.7" cy="236" rx="9.5" ry="8.2" fill="url(#gAnt)"/>
<ellipse filter="url(#b1)" cx="372.4" cy="237" rx="8.5" ry="6.3" fill="url(#gAnt)"/>
<ellipse filter="url(#b1)" cx="403.1" cy="237" rx="9.6" ry="8" fill="url(#gAnt)"/>
<ellipse filter="url(#b1)" cx="433.8" cy="237" rx="10" ry="8" fill="url(#gAnt)"/>
<g filter="url(#b1)"><rect x="461.40000000000003" y="226" width="6.4" height="19" rx="2.5" fill="url(#gImp)"/><ellipse cx="464.6" cy="245" rx="3.4" ry="2.6" fill="#3c3c3c"/></g>
<ellipse filter="url(#b1)" cx="495.3" cy="236" rx="10" ry="9.5" fill="url(#gAnt)"/>
<g filter="url(#b1)"><rect x="522.8" y="226" width="6.4" height="19" rx="2.5" fill="url(#gImp)"/><ellipse cx="526.0" cy="245" rx="3.4" ry="2.6" fill="#3c3c3c"/></g>
<ellipse filter="url(#b1)" cx="556.7" cy="238" rx="8.8" ry="9.2" fill="url(#gPre)"/>
<g filter="url(#b1)"><rect x="575.4" y="224" width="24" height="26" rx="7.4399999999999995" ry="8.06" fill="url(#gMol)"/><ellipse cx="581.4" cy="241.55" rx="3.0" ry="3.6400000000000006" fill="#5c6458" opacity="0.75"/><ellipse cx="594.0" cy="240.9" rx="2.64" ry="3.9" fill="#5c6458" opacity="0.7"/><ellipse cx="588.0" cy="231.15" rx="3.5999999999999996" ry="2.86" fill="#8d937f" opacity="0.7"/><ellipse cx="588.0" cy="242.85" rx="3.3600000000000003" ry="5.2" fill="#f0ead8" opacity="0.9"/></g>
<g filter="url(#b1)"><rect x="605.7" y="224" width="25.0" height="26" rx="7.75" ry="8.06" fill="url(#gMol)"/><ellipse cx="611.95" cy="241.55" rx="3.125" ry="3.6400000000000006" fill="#5c6458" opacity="0.75"/><ellipse cx="625.075" cy="240.9" rx="2.75" ry="3.9" fill="#5c6458" opacity="0.7"/><ellipse cx="618.825" cy="231.15" rx="3.75" ry="2.86" fill="#8d937f" opacity="0.7"/><ellipse cx="618.825" cy="242.85" rx="3.5000000000000004" ry="5.2" fill="#f0ead8" opacity="0.9"/></g>
<g filter="url(#b1)"><rect x="208.5" y="417" width="24" height="24" rx="7.4399999999999995" ry="7.4399999999999995" fill="url(#gMolL)"/><path d="M213.3 429 H227.7 M220.5 421.8 V436.2" stroke="#9fa48f" stroke-width="2" opacity="0.8"/></g>
<g filter="url(#b1)"><rect x="239.1" y="417" width="24" height="24" rx="7.4399999999999995" ry="7.4399999999999995" fill="url(#gMolL)"/><path d="M243.9 429 H258.3 M251.1 421.8 V436.2" stroke="#9fa48f" stroke-width="2" opacity="0.8"/></g>
<ellipse filter="url(#b1)" cx="281.7" cy="429" rx="10.3" ry="10.3" fill="url(#gPreL)"/>
<ellipse filter="url(#b1)" cx="312.3" cy="429" rx="9.6" ry="9.6" fill="url(#gPreL)"/>
<ellipse filter="url(#b1)" cx="342.9" cy="428.5" rx="8.6" ry="8" fill="url(#gAnt)"/>
<ellipse filter="url(#b1)" cx="373.5" cy="429" rx="8" ry="7" fill="url(#gAnt)"/>
<ellipse filter="url(#b1)" cx="404.1" cy="429" rx="7.6" ry="6.8" fill="url(#gAnt)"/>
<ellipse filter="url(#b1)" cx="434.70000000000005" cy="429" rx="7.6" ry="6.8" fill="url(#gAnt)"/>
<ellipse filter="url(#b1)" cx="465.3" cy="429" rx="8.4" ry="7.4" fill="url(#gAnt)"/>
<ellipse filter="url(#b1)" cx="495.90000000000003" cy="428.5" rx="9.6" ry="9" fill="url(#gAnt)"/>
<ellipse filter="url(#b1)" cx="526.5" cy="429" rx="10.4" ry="10" fill="url(#gPreL)"/>
<ellipse filter="url(#b1)" cx="557.1" cy="429" rx="11" ry="10.6" fill="url(#gPreL)"/>
<g filter="url(#b1)"><rect x="574.7" y="417" width="26" height="24" rx="8.06" ry="7.4399999999999995" fill="url(#gMolL)"/><path d="M579.9000000000001 429 H595.5 M587.7 421.8 V436.2" stroke="#9fa48f" stroke-width="2" opacity="0.8"/></g>
<g filter="url(#b1)"><rect x="605.3" y="417" width="26" height="24" rx="8.06" ry="7.4399999999999995" fill="url(#gMolL)"/><path d="M610.5 429 H626.0999999999999 M618.3 421.8 V436.2" stroke="#9fa48f" stroke-width="2" opacity="0.8"/></g>
</svg>
<div class="a" id="pg-head" style="left:784px;top:122px;width:654px;height:25px;background:#05245b;"></div>
<div class="a" id="pg-body" style="left:784px;top:147px;width:654px;height:339px;background:#fdfdfd;border-left:1px solid #a9a9a9;border-bottom:1.5px solid #b3b3b3;box-sizing:border-box;"></div>
<svg class="a" id="pgsvg" style="left:785px;top:147px" width="653" height="338" viewBox="785 147 653 338">
<defs>
<filter id="tb" x="-10%" y="-10%" width="120%" height="120%"><feGaussianBlur stdDeviation="0.75"/></filter>
<linearGradient id="tgU" x1="0" y1="0" x2="0" y2="1"><stop offset="0" stop-color="#c0b980"/><stop offset="0.3" stop-color="#c6c08a"/><stop offset="0.55" stop-color="#c0bc8c"/><stop offset="0.63" stop-color="#e3e4d3"/><stop offset="0.8" stop-color="#f2f3ec"/><stop offset="1" stop-color="#e8e9de"/></linearGradient>
<linearGradient id="tgD" x1="0" y1="1" x2="0" y2="0"><stop offset="0" stop-color="#c0b980"/><stop offset="0.3" stop-color="#c6c08a"/><stop offset="0.55" stop-color="#c0bc8c"/><stop offset="0.63" stop-color="#e3e4d3"/><stop offset="0.8" stop-color="#f2f3ec"/><stop offset="1" stop-color="#e8e9de"/></linearGradient>
<linearGradient id="shade" x1="0" y1="0" x2="1" y2="0"><stop offset="0" stop-color="#77774a" stop-opacity="0.22"/><stop offset="0.2" stop-color="#fff" stop-opacity="0.3"/><stop offset="0.45" stop-color="#fff" stop-opacity="0.05"/><stop offset="0.72" stop-color="#6a6a40" stop-opacity="0.16"/><stop offset="1" stop-color="#4a4a30" stop-opacity="0.5"/></linearGradient>
</defs>
<g filter="url(#tb)">
<path d="M844.1 163.0 C844.1 159.4 850.9 159.4 850.9 163.0 Q856.1 175.7 858.5 193.0 C859.2 196.6 861.0 199.6 861.0 205.4 C861.0 216.2 858.3 220.0 852.9 220.0 L842.1 220.0 C836.7 220.0 834.0 216.2 834.0 205.4 C834.0 199.6 835.8 196.6 836.5 193.0 Q838.9 175.7 844.1 163.0 Z" fill="url(#tgU)"/><path d="M844.1 163.0 C844.1 159.4 850.9 159.4 850.9 163.0 Q856.1 175.7 858.5 193.0 C859.2 196.6 861.0 199.6 861.0 205.4 C861.0 216.2 858.3 220.0 852.9 220.0 L842.1 220.0 C836.7 220.0 834.0 216.2 834.0 205.4 C834.0 199.6 835.8 196.6 836.5 193.0 Q838.9 175.7 844.1 163.0 Z" fill="url(#shade)"/>
<path d="M884.9 154.4 C884.9 151.5 889.1 151.5 889.1 154.4 Q892.6 171.8 894.4 194.6 C894.8 197.6 895.2 200.0 895.2 198.2 C895.2 200.3 893.6 201.0 890.3 201.0 L883.7 201.0 C880.4 201.0 878.8 200.3 878.8 198.2 C878.8 200.0 879.2 197.6 879.6 194.6 Q881.4 171.8 884.9 154.4 Z" fill="#cbc698"/>
<path d="M875.0 163.1 C875.0 159.4 880.7 159.4 881.0 163.1 Q884.6 175.6 886.0 186.0 L887.8 186.0 Q889.0 175.6 891.5 165.0 C891.5 161.2 897.8 161.2 897.8 165.0 Q900.8 178.6 899.9 195.3 C900.5 199.1 902.0 202.2 902.0 207.6 C902.0 218.3 900.2 222.0 895.2 222.0 L878.8 222.0 C873.8 222.0 872.0 218.3 872.0 207.6 C872.0 202.2 873.5 199.1 874.1 195.3 Q872.6 178.6 875.0 163.1 Z" fill="url(#tgU)"/><path d="M875.0 163.1 C875.0 159.4 880.7 159.4 881.0 163.1 Q884.6 175.6 886.0 186.0 L887.8 186.0 Q889.0 175.6 891.5 165.0 C891.5 161.2 897.8 161.2 897.8 165.0 Q900.8 178.6 899.9 195.3 C900.5 199.1 902.0 202.2 902.0 207.6 C902.0 218.3 900.2 222.0 895.2 222.0 L878.8 222.0 C873.8 222.0 872.0 218.3 872.0 207.6 C872.0 202.2 873.5 199.1 874.1 195.3 Q872.6 178.6 875.0 163.1 Z" fill="url(#shade)"/>
<path d="M967.9 158.3 C967.9 154.3 973.1 154.3 973.1 158.3 Q976.3 172.5 977.4 191.8 C978.0 195.9 981.0 199.2 981.0 205.7 C981.0 217.8 978.9 222.0 974.7 222.0 L966.3 222.0 C962.1 222.0 960.0 217.8 960.0 205.7 C960.0 199.2 963.0 195.9 963.6 191.8 Q964.7 172.5 967.9 158.3 Z" fill="url(#tgU)"/><path d="M967.9 158.3 C967.9 154.3 973.1 154.3 973.1 158.3 Q976.3 172.5 977.4 191.8 C978.0 195.9 981.0 199.2 981.0 205.7 C981.0 217.8 978.9 222.0 974.7 222.0 L966.3 222.0 C962.1 222.0 960.0 217.8 960.0 205.7 C960.0 199.2 963.0 195.9 963.6 191.8 Q964.7 172.5 967.9 158.3 Z" fill="url(#shade)"/>
<path d="M1006.1 154.6 C1006.1 149.7 1011.9 149.7 1011.9 154.6 Q1015.4 171.6 1016.6 195.1 C1017.2 199.9 1020.5 204.0 1020.5 211.8 C1020.5 226.4 1018.2 231.5 1013.6 231.5 L1004.4 231.5 C999.8 231.5 997.5 226.4 997.5 211.8 C997.5 204.0 1000.8 199.9 1001.4 195.1 Q1002.6 171.6 1006.1 154.6 Z" fill="url(#tgU)"/><path d="M1006.1 154.6 C1006.1 149.7 1011.9 149.7 1011.9 154.6 Q1015.4 171.6 1016.6 195.1 C1017.2 199.9 1020.5 204.0 1020.5 211.8 C1020.5 226.4 1018.2 231.5 1013.6 231.5 L1004.4 231.5 C999.8 231.5 997.5 226.4 997.5 211.8 C997.5 204.0 1000.8 199.9 1001.4 195.1 Q1002.6 171.6 1006.1 154.6 Z" fill="url(#shade)"/>
<path d="M1048.8 155.5 C1048.8 151.3 1054.2 151.3 1054.2 155.5 Q1057.5 170.1 1058.5 190.2 C1059.0 194.4 1062.5 197.9 1062.5 204.6 C1062.5 217.1 1060.3 221.5 1055.9 221.5 L1047.1 221.5 C1042.7 221.5 1040.5 217.1 1040.5 204.6 C1040.5 197.9 1044.0 194.4 1044.5 190.2 Q1045.5 170.1 1048.8 155.5 Z" fill="url(#tgU)"/><path d="M1048.8 155.5 C1048.8 151.3 1054.2 151.3 1054.2 155.5 Q1057.5 170.1 1058.5 190.2 C1059.0 194.4 1062.5 197.9 1062.5 204.6 C1062.5 217.1 1060.3 221.5 1055.9 221.5 L1047.1 221.5 C1042.7 221.5 1040.5 217.1 1040.5 204.6 C1040.5 197.9 1044.0 194.4 1044.5 190.2 Q1045.5 170.1 1048.8 155.5 Z" fill="url(#shade)"/>
<path d="M1086.9 156.6 C1086.9 152.3 1093.1 152.3 1093.1 156.6 Q1096.6 171.8 1097.6 192.6 C1098.2 196.9 1102.5 200.5 1102.5 207.5 C1102.5 220.5 1100.0 225.0 1095.0 225.0 L1085.0 225.0 C1080.0 225.0 1077.5 220.5 1077.5 207.5 C1077.5 200.5 1081.8 196.9 1082.4 192.6 Q1083.4 171.8 1086.9 156.6 Z" fill="url(#tgU)"/><path d="M1086.9 156.6 C1086.9 152.3 1093.1 152.3 1093.1 156.6 Q1096.6 171.8 1097.6 192.6 C1098.2 196.9 1102.5 200.5 1102.5 207.5 C1102.5 220.5 1100.0 225.0 1095.0 225.0 L1085.0 225.0 C1080.0 225.0 1077.5 220.5 1077.5 207.5 C1077.5 200.5 1081.8 196.9 1082.4 192.6 Q1083.4 171.8 1086.9 156.6 Z" fill="url(#shade)"/>
<path d="M1127.3 156.6 C1127.3 152.3 1133.7 152.3 1133.7 156.6 Q1137.2 171.8 1138.2 192.6 C1138.9 196.9 1143.2 200.5 1143.2 207.5 C1143.2 220.5 1140.7 225.0 1135.6 225.0 L1125.4 225.0 C1120.3 225.0 1117.8 220.5 1117.8 207.5 C1117.8 200.5 1122.1 196.9 1122.8 192.6 Q1123.8 171.8 1127.3 156.6 Z" fill="url(#tgU)"/><path d="M1127.3 156.6 C1127.3 152.3 1133.7 152.3 1133.7 156.6 Q1137.2 171.8 1138.2 192.6 C1138.9 196.9 1143.2 200.5 1143.2 207.5 C1143.2 220.5 1140.7 225.0 1135.6 225.0 L1125.4 225.0 C1120.3 225.0 1117.8 220.5 1117.8 207.5 C1117.8 200.5 1122.1 196.9 1122.8 192.6 Q1123.8 171.8 1127.3 156.6 Z" fill="url(#shade)"/>
<path d="M1164.1 155.5 C1164.1 151.3 1168.9 151.3 1168.9 155.5 Q1171.8 170.1 1172.8 190.2 C1173.2 194.4 1176.0 197.9 1176.0 204.6 C1176.0 217.1 1174.1 221.5 1170.3 221.5 L1162.7 221.5 C1158.9 221.5 1157.0 217.1 1157.0 204.6 C1157.0 197.9 1159.8 194.4 1160.2 190.2 Q1161.2 170.1 1164.1 155.5 Z" fill="url(#tgU)"/><path d="M1164.1 155.5 C1164.1 151.3 1168.9 151.3 1168.9 155.5 Q1171.8 170.1 1172.8 190.2 C1173.2 194.4 1176.0 197.9 1176.0 204.6 C1176.0 217.1 1174.1 221.5 1170.3 221.5 L1162.7 221.5 C1158.9 221.5 1157.0 217.1 1157.0 204.6 C1157.0 197.9 1159.8 194.4 1160.2 190.2 Q1161.2 170.1 1164.1 155.5 Z" fill="url(#shade)"/>
<path d="M1206.6 154.9 C1206.6 150.2 1212.4 150.2 1212.4 154.9 Q1215.9 171.5 1217.1 194.2 C1217.7 198.9 1221.0 202.8 1221.0 210.4 C1221.0 224.6 1218.7 229.5 1214.1 229.5 L1204.9 229.5 C1200.3 229.5 1198.0 224.6 1198.0 210.4 C1198.0 202.8 1201.3 198.9 1201.9 194.2 Q1203.1 171.5 1206.6 154.9 Z" fill="url(#tgU)"/><path d="M1206.6 154.9 C1206.6 150.2 1212.4 150.2 1212.4 154.9 Q1215.9 171.5 1217.1 194.2 C1217.7 198.9 1221.0 202.8 1221.0 210.4 C1221.0 224.6 1218.7 229.5 1214.1 229.5 L1204.9 229.5 C1200.3 229.5 1198.0 224.6 1198.0 210.4 C1198.0 202.8 1201.3 198.9 1201.9 194.2 Q1203.1 171.5 1206.6 154.9 Z" fill="url(#shade)"/>
<path d="M1247.4 157.8 C1247.4 153.8 1252.6 153.8 1252.6 157.8 Q1255.8 171.7 1256.9 190.8 C1257.5 194.8 1260.5 198.1 1260.5 204.4 C1260.5 216.3 1258.4 220.5 1254.2 220.5 L1245.8 220.5 C1241.6 220.5 1239.5 216.3 1239.5 204.4 C1239.5 198.1 1242.5 194.8 1243.1 190.8 Q1244.2 171.7 1247.4 157.8 Z" fill="url(#tgU)"/><path d="M1247.4 157.8 C1247.4 153.8 1252.6 153.8 1252.6 157.8 Q1255.8 171.7 1256.9 190.8 C1257.5 194.8 1260.5 198.1 1260.5 204.4 C1260.5 216.3 1258.4 220.5 1254.2 220.5 L1245.8 220.5 C1241.6 220.5 1239.5 216.3 1239.5 204.4 C1239.5 198.1 1242.5 194.8 1243.1 190.8 Q1244.2 171.7 1247.4 157.8 Z" fill="url(#shade)"/>
<path d="M1290.0 156.3 C1290.0 152.3 1295.0 152.3 1295.0 156.3 Q1298.0 170.4 1299.1 189.6 C1299.6 193.6 1302.5 196.9 1302.5 203.3 C1302.5 215.3 1300.5 219.5 1296.5 219.5 L1288.5 219.5 C1284.5 219.5 1282.5 215.3 1282.5 203.3 C1282.5 196.9 1285.4 193.6 1285.9 189.6 Q1287.0 170.4 1290.0 156.3 Z" fill="url(#tgU)"/><path d="M1290.0 156.3 C1290.0 152.3 1295.0 152.3 1295.0 156.3 Q1298.0 170.4 1299.1 189.6 C1299.6 193.6 1302.5 196.9 1302.5 203.3 C1302.5 215.3 1300.5 219.5 1296.5 219.5 L1288.5 219.5 C1284.5 219.5 1282.5 215.3 1282.5 203.3 C1282.5 196.9 1285.4 193.6 1285.9 189.6 Q1287.0 170.4 1290.0 156.3 Z" fill="url(#shade)"/>
<path d="M1330.6 154.4 C1330.6 151.5 1334.4 151.5 1334.4 154.4 Q1337.7 171.4 1339.4 193.7 C1339.8 196.6 1340.2 199.0 1340.2 197.2 C1340.2 199.2 1338.7 199.9 1335.6 199.9 L1329.4 199.9 C1326.3 199.9 1324.8 199.2 1324.8 197.2 C1324.8 199.0 1325.2 196.6 1325.6 193.7 Q1327.3 171.4 1330.6 154.4 Z" fill="#cbc698"/>
<path d="M1321.3 163.0 C1321.3 159.4 1326.6 159.4 1326.9 163.0 Q1330.3 175.2 1331.5 185.4 L1333.2 185.4 Q1334.3 175.2 1336.7 164.8 C1336.7 161.2 1342.6 161.2 1342.6 164.8 Q1345.4 178.2 1344.5 194.5 C1345.1 198.1 1346.5 201.1 1346.5 206.5 C1346.5 216.9 1344.8 220.5 1340.2 220.5 L1324.8 220.5 C1320.2 220.5 1318.5 216.9 1318.5 206.5 C1318.5 201.1 1319.9 198.1 1320.5 194.5 Q1319.1 178.2 1321.3 163.0 Z" fill="url(#tgU)"/><path d="M1321.3 163.0 C1321.3 159.4 1326.6 159.4 1326.9 163.0 Q1330.3 175.2 1331.5 185.4 L1333.2 185.4 Q1334.3 175.2 1336.7 164.8 C1336.7 161.2 1342.6 161.2 1342.6 164.8 Q1345.4 178.2 1344.5 194.5 C1345.1 198.1 1346.5 201.1 1346.5 206.5 C1346.5 216.9 1344.8 220.5 1340.2 220.5 L1324.8 220.5 C1320.2 220.5 1318.5 216.9 1318.5 206.5 C1318.5 201.1 1319.9 198.1 1320.5 194.5 Q1319.1 178.2 1321.3 163.0 Z" fill="url(#shade)"/>
<path d="M1368.8 162.9 C1368.8 159.4 1375.2 159.4 1375.2 162.9 Q1380.1 175.1 1382.5 191.9 C1383.1 195.4 1384.8 198.3 1384.8 203.9 C1384.8 214.3 1382.2 218.0 1377.1 218.0 L1366.9 218.0 C1361.8 218.0 1359.2 214.3 1359.2 203.9 C1359.2 198.3 1360.9 195.4 1361.5 191.9 Q1363.9 175.1 1368.8 162.9 Z" fill="url(#tgU)"/><path d="M1368.8 162.9 C1368.8 159.4 1375.2 159.4 1375.2 162.9 Q1380.1 175.1 1382.5 191.9 C1383.1 195.4 1384.8 198.3 1384.8 203.9 C1384.8 214.3 1382.2 218.0 1377.1 218.0 L1366.9 218.0 C1361.8 218.0 1359.2 214.3 1359.2 203.9 C1359.2 198.3 1360.9 195.4 1361.5 191.9 Q1363.9 175.1 1368.8 162.9 Z" fill="url(#shade)"/>
<path d="M843.2 298.2 C843.2 301.6 849.8 301.6 849.8 298.2 Q854.6 286.3 856.8 269.9 C857.4 266.5 859.5 263.7 859.5 258.3 C859.5 248.1 856.9 244.5 851.7 244.5 L841.3 244.5 C836.1 244.5 833.5 248.1 833.5 258.3 C833.5 263.7 835.6 266.5 836.2 269.9 Q838.4 286.3 843.2 298.2 Z" fill="url(#tgD)"/><path d="M843.2 298.2 C843.2 301.6 849.8 301.6 849.8 298.2 Q854.6 286.3 856.8 269.9 C857.4 266.5 859.5 263.7 859.5 258.3 C859.5 248.1 856.9 244.5 851.7 244.5 L841.3 244.5 C836.1 244.5 833.5 248.1 833.5 258.3 C833.5 263.7 835.6 266.5 836.2 269.9 Q838.4 286.3 843.2 298.2 Z" fill="url(#shade)"/>
<path d="M875.9 306.7 C875.9 310.7 881.4 310.7 881.7 306.7 Q885.2 294.0 886.5 283.4 L888.2 283.4 Q889.4 294.0 891.9 304.8 C891.9 308.7 897.9 308.7 897.9 304.8 Q900.8 291.0 900.0 274.0 C900.5 270.0 902.0 266.8 902.0 260.5 C902.0 248.6 900.3 244.5 895.5 244.5 L879.5 244.5 C874.7 244.5 873.0 248.6 873.0 260.5 C873.0 266.8 874.5 270.0 875.0 274.0 Q873.6 291.0 875.9 306.7 Z" fill="url(#tgD)"/><path d="M875.9 306.7 C875.9 310.7 881.4 310.7 881.7 306.7 Q885.2 294.0 886.5 283.4 L888.2 283.4 Q889.4 294.0 891.9 304.8 C891.9 308.7 897.9 308.7 897.9 304.8 Q900.8 291.0 900.0 274.0 C900.5 270.0 902.0 266.8 902.0 260.5 C902.0 248.6 900.3 244.5 895.5 244.5 L879.5 244.5 C874.7 244.5 873.0 248.6 873.0 260.5 C873.0 266.8 874.5 270.0 875.0 274.0 Q873.6 291.0 875.9 306.7 Z" fill="url(#shade)"/>
<path d="M965.9 303.4 C965.9 307.1 971.1 307.1 971.1 303.4 Q974.2 290.3 975.3 272.4 C975.8 268.7 978.8 265.6 978.8 259.6 C978.8 248.4 976.7 244.5 972.6 244.5 L964.4 244.5 C960.3 244.5 958.2 248.4 958.2 259.6 C958.2 265.6 961.2 268.7 961.7 272.4 Q962.8 290.3 965.9 303.4 Z" fill="url(#tgD)"/><path d="M965.9 303.4 C965.9 307.1 971.1 307.1 971.1 303.4 Q974.2 290.3 975.3 272.4 C975.8 268.7 978.8 265.6 978.8 259.6 C978.8 248.4 976.7 244.5 972.6 244.5 L964.4 244.5 C960.3 244.5 958.2 248.4 958.2 259.6 C958.2 265.6 961.2 268.7 961.7 272.4 Q962.8 290.3 965.9 303.4 Z" fill="url(#shade)"/>
<path d="M1005.1 307.2 C1005.1 311.8 1009.9 311.8 1009.9 307.2 Q1013.2 291.0 1014.6 268.9 C1015.1 264.3 1017.2 260.5 1017.2 253.1 C1017.2 239.3 1015.3 234.5 1011.4 234.5 L1003.6 234.5 C999.7 234.5 997.8 239.3 997.8 253.1 C997.8 260.5 999.9 264.3 1000.4 268.9 Q1001.8 291.0 1005.1 307.2 Z" fill="url(#tgD)"/><path d="M1005.1 307.2 C1005.1 311.8 1009.9 311.8 1009.9 307.2 Q1013.2 291.0 1014.6 268.9 C1015.1 264.3 1017.2 260.5 1017.2 253.1 C1017.2 239.3 1015.3 234.5 1011.4 234.5 L1003.6 234.5 C999.7 234.5 997.8 239.3 997.8 253.1 C997.8 260.5 999.9 264.3 1000.4 268.9 Q1001.8 291.0 1005.1 307.2 Z" fill="url(#shade)"/>
<path d="M1045.2 302.2 C1045.2 306.2 1049.8 306.2 1049.8 302.2 Q1052.5 288.4 1053.4 269.5 C1053.9 265.5 1056.5 262.3 1056.5 256.0 C1056.5 244.1 1054.7 240.0 1051.1 240.0 L1043.9 240.0 C1040.3 240.0 1038.5 244.1 1038.5 256.0 C1038.5 262.3 1041.1 265.5 1041.6 269.5 Q1042.5 288.4 1045.2 302.2 Z" fill="url(#tgD)"/><path d="M1045.2 302.2 C1045.2 306.2 1049.8 306.2 1049.8 302.2 Q1052.5 288.4 1053.4 269.5 C1053.9 265.5 1056.5 262.3 1056.5 256.0 C1056.5 244.1 1054.7 240.0 1051.1 240.0 L1043.9 240.0 C1040.3 240.0 1038.5 244.1 1038.5 256.0 C1038.5 262.3 1041.1 265.5 1041.6 269.5 Q1042.5 288.4 1045.2 302.2 Z" fill="url(#shade)"/>
<path d="M1088.1 304.1 C1088.1 308.2 1093.9 308.2 1093.9 304.1 Q1097.2 289.9 1098.1 270.4 C1098.7 266.3 1102.8 262.9 1102.8 256.4 C1102.8 244.3 1100.4 240.0 1095.7 240.0 L1086.3 240.0 C1081.6 240.0 1079.2 244.3 1079.2 256.4 C1079.2 262.9 1083.3 266.3 1083.9 270.4 Q1084.8 289.9 1088.1 304.1 Z" fill="url(#tgD)"/><path d="M1088.1 304.1 C1088.1 308.2 1093.9 308.2 1093.9 304.1 Q1097.2 289.9 1098.1 270.4 C1098.7 266.3 1102.8 262.9 1102.8 256.4 C1102.8 244.3 1100.4 240.0 1095.7 240.0 L1086.3 240.0 C1081.6 240.0 1079.2 244.3 1079.2 256.4 C1079.2 262.9 1083.3 266.3 1083.9 270.4 Q1084.8 289.9 1088.1 304.1 Z" fill="url(#shade)"/>
<path d="M1127.6 303.2 C1127.6 307.2 1133.4 307.2 1133.4 303.2 Q1136.6 289.3 1137.5 270.2 C1138.1 266.2 1142.0 262.9 1142.0 256.6 C1142.0 244.7 1139.7 240.5 1135.1 240.5 L1125.9 240.5 C1121.3 240.5 1119.0 244.7 1119.0 256.6 C1119.0 262.9 1122.9 266.2 1123.5 270.2 Q1124.4 289.3 1127.6 303.2 Z" fill="url(#tgD)"/><path d="M1127.6 303.2 C1127.6 307.2 1133.4 307.2 1133.4 303.2 Q1136.6 289.3 1137.5 270.2 C1138.1 266.2 1142.0 262.9 1142.0 256.6 C1142.0 244.7 1139.7 240.5 1135.1 240.5 L1125.9 240.5 C1121.3 240.5 1119.0 244.7 1119.0 256.6 C1119.0 262.9 1122.9 266.2 1123.5 270.2 Q1124.4 289.3 1127.6 303.2 Z" fill="url(#shade)"/>
<path d="M1170.2 302.2 C1170.2 306.2 1174.8 306.2 1174.8 302.2 Q1177.6 288.4 1178.6 269.5 C1179.1 265.5 1181.8 262.3 1181.8 256.0 C1181.8 244.1 1179.9 240.0 1176.2 240.0 L1168.8 240.0 C1165.1 240.0 1163.2 244.1 1163.2 256.0 C1163.2 262.3 1165.9 265.5 1166.4 269.5 Q1167.4 288.4 1170.2 302.2 Z" fill="url(#tgD)"/><path d="M1170.2 302.2 C1170.2 306.2 1174.8 306.2 1174.8 302.2 Q1177.6 288.4 1178.6 269.5 C1179.1 265.5 1181.8 262.3 1181.8 256.0 C1181.8 244.1 1179.9 240.0 1176.2 240.0 L1168.8 240.0 C1165.1 240.0 1163.2 244.1 1163.2 256.0 C1163.2 262.3 1165.9 265.5 1166.4 269.5 Q1167.4 288.4 1170.2 302.2 Z" fill="url(#shade)"/>
<path d="M1211.0 307.2 C1211.0 311.8 1216.0 311.8 1216.0 307.2 Q1219.4 291.4 1220.8 269.8 C1221.3 265.2 1223.5 261.5 1223.5 254.3 C1223.5 240.7 1221.5 236.0 1217.5 236.0 L1209.5 236.0 C1205.5 236.0 1203.5 240.7 1203.5 254.3 C1203.5 261.5 1205.7 265.2 1206.2 269.8 Q1207.6 291.4 1211.0 307.2 Z" fill="url(#tgD)"/><path d="M1211.0 307.2 C1211.0 311.8 1216.0 311.8 1216.0 307.2 Q1219.4 291.4 1220.8 269.8 C1221.3 265.2 1223.5 261.5 1223.5 254.3 C1223.5 240.7 1221.5 236.0 1217.5 236.0 L1209.5 236.0 C1205.5 236.0 1203.5 240.7 1203.5 254.3 C1203.5 261.5 1205.7 265.2 1206.2 269.8 Q1207.6 291.4 1211.0 307.2 Z" fill="url(#shade)"/>
<path d="M1249.9 302.5 C1249.9 306.1 1255.1 306.1 1255.1 302.5 Q1258.3 289.7 1259.4 272.2 C1260.0 268.6 1263.0 265.6 1263.0 259.7 C1263.0 248.8 1260.9 245.0 1256.7 245.0 L1248.3 245.0 C1244.1 245.0 1242.0 248.8 1242.0 259.7 C1242.0 265.6 1245.0 268.6 1245.6 272.2 Q1246.7 289.7 1249.9 302.5 Z" fill="url(#tgD)"/><path d="M1249.9 302.5 C1249.9 306.1 1255.1 306.1 1255.1 302.5 Q1258.3 289.7 1259.4 272.2 C1260.0 268.6 1263.0 265.6 1263.0 259.7 C1263.0 248.8 1260.9 245.0 1256.7 245.0 L1248.3 245.0 C1244.1 245.0 1242.0 248.8 1242.0 259.7 C1242.0 265.6 1245.0 268.6 1245.6 272.2 Q1246.7 289.7 1249.9 302.5 Z" fill="url(#shade)"/>
<path d="M1291.0 304.4 C1291.0 308.1 1296.0 308.1 1296.0 304.4 Q1299.0 291.2 1300.1 273.1 C1300.6 269.4 1303.5 266.2 1303.5 260.2 C1303.5 248.9 1301.5 245.0 1297.5 245.0 L1289.5 245.0 C1285.5 245.0 1283.5 248.9 1283.5 260.2 C1283.5 266.2 1286.4 269.4 1286.9 273.1 Q1288.0 291.2 1291.0 304.4 Z" fill="url(#tgD)"/><path d="M1291.0 304.4 C1291.0 308.1 1296.0 308.1 1296.0 304.4 Q1299.0 291.2 1300.1 273.1 C1300.6 269.4 1303.5 266.2 1303.5 260.2 C1303.5 248.9 1301.5 245.0 1297.5 245.0 L1289.5 245.0 C1285.5 245.0 1283.5 248.9 1283.5 260.2 C1283.5 266.2 1286.4 269.4 1286.9 273.1 Q1288.0 291.2 1291.0 304.4 Z" fill="url(#shade)"/>
<path d="M1322.3 306.8 C1322.3 310.6 1327.6 310.6 1327.9 306.8 Q1331.3 294.2 1332.5 283.6 L1334.2 283.6 Q1335.3 294.2 1337.7 304.8 C1337.7 308.7 1343.6 308.7 1343.6 304.8 Q1346.4 291.1 1345.5 274.2 C1346.1 270.4 1347.5 267.1 1347.5 260.8 C1347.5 249.1 1345.8 245.0 1341.2 245.0 L1325.8 245.0 C1321.2 245.0 1319.5 249.1 1319.5 260.8 C1319.5 267.1 1320.9 270.4 1321.5 274.2 Q1320.1 291.1 1322.3 306.8 Z" fill="url(#tgD)"/><path d="M1322.3 306.8 C1322.3 310.6 1327.6 310.6 1327.9 306.8 Q1331.3 294.2 1332.5 283.6 L1334.2 283.6 Q1335.3 294.2 1337.7 304.8 C1337.7 308.7 1343.6 308.7 1343.6 304.8 Q1346.4 291.1 1345.5 274.2 C1346.1 270.4 1347.5 267.1 1347.5 260.8 C1347.5 249.1 1345.8 245.0 1341.2 245.0 L1325.8 245.0 C1321.2 245.0 1319.5 249.1 1319.5 260.8 C1319.5 267.1 1320.9 270.4 1321.5 274.2 Q1320.1 291.1 1322.3 306.8 Z" fill="url(#shade)"/>
<path d="M1372.9 299.2 C1372.9 302.6 1379.1 302.6 1379.1 299.2 Q1383.8 287.3 1386.0 270.9 C1386.6 267.5 1388.2 264.7 1388.2 259.3 C1388.2 249.1 1385.8 245.5 1380.9 245.5 L1371.1 245.5 C1366.2 245.5 1363.8 249.1 1363.8 259.3 C1363.8 264.7 1365.4 267.5 1366.0 270.9 Q1368.2 287.3 1372.9 299.2 Z" fill="url(#tgD)"/><path d="M1372.9 299.2 C1372.9 302.6 1379.1 302.6 1379.1 299.2 Q1383.8 287.3 1386.0 270.9 C1386.6 267.5 1388.2 264.7 1388.2 259.3 C1388.2 249.1 1385.8 245.5 1380.9 245.5 L1371.1 245.5 C1366.2 245.5 1363.8 249.1 1363.8 259.3 C1363.8 264.7 1365.4 267.5 1366.0 270.9 Q1368.2 287.3 1372.9 299.2 Z" fill="url(#shade)"/>
<path d="M834.3 322.2 C834.3 318.4 840.1 318.4 840.4 322.2 Q844.1 334.6 845.4 345.0 L847.3 345.0 Q848.5 334.6 851.1 324.1 C851.1 320.3 857.5 320.3 857.5 324.1 Q860.5 337.6 859.6 354.2 C860.2 358.0 861.8 361.2 861.8 367.4 C861.8 379.0 859.9 383.0 854.9 383.0 L838.1 383.0 C833.1 383.0 831.2 379.0 831.2 367.4 C831.2 361.2 832.8 358.0 833.4 354.2 Q831.9 337.6 834.3 322.2 Z" fill="url(#tgU)"/><path d="M834.3 322.2 C834.3 318.4 840.1 318.4 840.4 322.2 Q844.1 334.6 845.4 345.0 L847.3 345.0 Q848.5 334.6 851.1 324.1 C851.1 320.3 857.5 320.3 857.5 324.1 Q860.5 337.6 859.6 354.2 C860.2 358.0 861.8 361.2 861.8 367.4 C861.8 379.0 859.9 383.0 854.9 383.0 L838.1 383.0 C833.1 383.0 831.2 379.0 831.2 367.4 C831.2 361.2 832.8 358.0 833.4 354.2 Q831.9 337.6 834.3 322.2 Z" fill="url(#shade)"/>
<path d="M875.0 323.3 C875.0 319.3 881.2 319.3 881.5 323.3 Q885.4 336.0 886.9 346.6 L888.8 346.6 Q890.1 336.0 892.9 325.2 C892.9 321.3 899.7 321.3 899.7 325.2 Q903.0 339.0 902.0 356.0 C902.6 360.0 904.2 363.2 904.2 369.5 C904.2 381.4 902.3 385.5 896.9 385.5 L879.1 385.5 C873.7 385.5 871.8 381.4 871.8 369.5 C871.8 363.2 873.4 360.0 874.0 356.0 Q872.4 339.0 875.0 323.3 Z" fill="url(#tgU)"/><path d="M875.0 323.3 C875.0 319.3 881.2 319.3 881.5 323.3 Q885.4 336.0 886.9 346.6 L888.8 346.6 Q890.1 336.0 892.9 325.2 C892.9 321.3 899.7 321.3 899.7 325.2 Q903.0 339.0 902.0 356.0 C902.6 360.0 904.2 363.2 904.2 369.5 C904.2 381.4 902.3 385.5 896.9 385.5 L879.1 385.5 C873.7 385.5 871.8 381.4 871.8 369.5 C871.8 363.2 873.4 360.0 874.0 356.0 Q872.4 339.0 875.0 323.3 Z" fill="url(#shade)"/>
<path d="M921.7 323.4 C921.7 319.3 927.3 319.3 927.3 323.4 Q930.7 337.9 931.9 357.7 C932.5 361.8 935.8 365.2 935.8 371.8 C935.8 384.2 933.5 388.5 929.0 388.5 L920.0 388.5 C915.5 388.5 913.2 384.2 913.2 371.8 C913.2 365.2 916.5 361.8 917.1 357.7 Q918.3 337.9 921.7 323.4 Z" fill="url(#tgU)"/><path d="M921.7 323.4 C921.7 319.3 927.3 319.3 927.3 323.4 Q930.7 337.9 931.9 357.7 C932.5 361.8 935.8 365.2 935.8 371.8 C935.8 384.2 933.5 388.5 929.0 388.5 L920.0 388.5 C915.5 388.5 913.2 384.2 913.2 371.8 C913.2 365.2 916.5 361.8 917.1 357.7 Q918.3 337.9 921.7 323.4 Z" fill="url(#shade)"/>
<path d="M966.7 322.5 C966.7 318.3 972.3 318.3 972.3 322.5 Q975.7 337.1 976.9 357.2 C977.5 361.4 980.8 364.9 980.8 371.6 C980.8 384.1 978.5 388.5 974.0 388.5 L965.0 388.5 C960.5 388.5 958.2 384.1 958.2 371.6 C958.2 364.9 961.5 361.4 962.1 357.2 Q963.3 337.1 966.7 322.5 Z" fill="url(#tgU)"/><path d="M966.7 322.5 C966.7 318.3 972.3 318.3 972.3 322.5 Q975.7 337.1 976.9 357.2 C977.5 361.4 980.8 364.9 980.8 371.6 C980.8 384.1 978.5 388.5 974.0 388.5 L965.0 388.5 C960.5 388.5 958.2 384.1 958.2 371.6 C958.2 364.9 961.5 361.4 962.1 357.2 Q963.3 337.1 966.7 322.5 Z" fill="url(#shade)"/>
<path d="M1005.8 321.7 C1005.8 317.3 1011.2 317.3 1011.2 321.7 Q1014.6 337.3 1015.9 358.7 C1016.4 363.1 1019.2 366.8 1019.2 374.0 C1019.2 387.3 1017.1 392.0 1012.8 392.0 L1004.2 392.0 C999.9 392.0 997.8 387.3 997.8 374.0 C997.8 366.8 1000.6 363.1 1001.1 358.7 Q1002.4 337.3 1005.8 321.7 Z" fill="url(#tgU)"/><path d="M1005.8 321.7 C1005.8 317.3 1011.2 317.3 1011.2 321.7 Q1014.6 337.3 1015.9 358.7 C1016.4 363.1 1019.2 366.8 1019.2 374.0 C1019.2 387.3 1017.1 392.0 1012.8 392.0 L1004.2 392.0 C999.9 392.0 997.8 387.3 997.8 374.0 C997.8 366.8 1000.6 363.1 1001.1 358.7 Q1002.4 337.3 1005.8 321.7 Z" fill="url(#shade)"/>
<path d="M1046.0 323.2 C1046.0 319.4 1051.0 319.4 1051.0 323.2 Q1053.8 336.8 1054.6 355.5 C1055.1 359.3 1058.5 362.6 1058.5 368.8 C1058.5 380.4 1056.5 384.5 1052.5 384.5 L1044.5 384.5 C1040.5 384.5 1038.5 380.4 1038.5 368.8 C1038.5 362.6 1041.9 359.3 1042.4 355.5 Q1043.2 336.8 1046.0 323.2 Z" fill="url(#tgU)"/><path d="M1046.0 323.2 C1046.0 319.4 1051.0 319.4 1051.0 323.2 Q1053.8 336.8 1054.6 355.5 C1055.1 359.3 1058.5 362.6 1058.5 368.8 C1058.5 380.4 1056.5 384.5 1052.5 384.5 L1044.5 384.5 C1040.5 384.5 1038.5 380.4 1038.5 368.8 C1038.5 362.6 1041.9 359.3 1042.4 355.5 Q1043.2 336.8 1046.0 323.2 Z" fill="url(#shade)"/>
<path d="M1087.1 323.4 C1087.1 319.3 1091.9 319.3 1091.9 323.4 Q1094.4 337.6 1095.0 357.1 C1095.5 361.2 1099.0 364.6 1099.0 371.1 C1099.0 383.2 1097.1 387.5 1093.3 387.5 L1085.7 387.5 C1081.9 387.5 1080.0 383.2 1080.0 371.1 C1080.0 364.6 1083.5 361.2 1084.0 357.1 Q1084.6 337.6 1087.1 323.4 Z" fill="url(#tgU)"/><path d="M1087.1 323.4 C1087.1 319.3 1091.9 319.3 1091.9 323.4 Q1094.4 337.6 1095.0 357.1 C1095.5 361.2 1099.0 364.6 1099.0 371.1 C1099.0 383.2 1097.1 387.5 1093.3 387.5 L1085.7 387.5 C1081.9 387.5 1080.0 383.2 1080.0 371.1 C1080.0 364.6 1083.5 361.2 1084.0 357.1 Q1084.6 337.6 1087.1 323.4 Z" fill="url(#shade)"/>
<path d="M1127.6 323.8 C1127.6 319.8 1132.4 319.8 1132.4 323.8 Q1135.0 337.7 1135.7 356.8 C1136.2 360.8 1139.8 364.1 1139.8 370.4 C1139.8 382.3 1137.8 386.5 1133.9 386.5 L1126.1 386.5 C1122.2 386.5 1120.2 382.3 1120.2 370.4 C1120.2 364.1 1123.8 360.8 1124.3 356.8 Q1125.0 337.7 1127.6 323.8 Z" fill="url(#tgU)"/><path d="M1127.6 323.8 C1127.6 319.8 1132.4 319.8 1132.4 323.8 Q1135.0 337.7 1135.7 356.8 C1136.2 360.8 1139.8 364.1 1139.8 370.4 C1139.8 382.3 1137.8 386.5 1133.9 386.5 L1126.1 386.5 C1122.2 386.5 1120.2 382.3 1120.2 370.4 C1120.2 364.1 1123.8 360.8 1124.3 356.8 Q1125.0 337.7 1127.6 323.8 Z" fill="url(#shade)"/>
<path d="M1169.1 323.3 C1169.1 319.3 1173.9 319.3 1173.9 323.3 Q1176.7 337.4 1177.4 356.6 C1177.9 360.6 1181.2 363.9 1181.2 370.3 C1181.2 382.3 1179.3 386.5 1175.4 386.5 L1167.6 386.5 C1163.7 386.5 1161.8 382.3 1161.8 370.3 C1161.8 363.9 1165.1 360.6 1165.6 356.6 Q1166.3 337.4 1169.1 323.3 Z" fill="url(#tgU)"/><path d="M1169.1 323.3 C1169.1 319.3 1173.9 319.3 1173.9 323.3 Q1176.7 337.4 1177.4 356.6 C1177.9 360.6 1181.2 363.9 1181.2 370.3 C1181.2 382.3 1179.3 386.5 1175.4 386.5 L1167.6 386.5 C1163.7 386.5 1161.8 382.3 1161.8 370.3 C1161.8 363.9 1165.1 360.6 1165.6 356.6 Q1166.3 337.4 1169.1 323.3 Z" fill="url(#shade)"/>
<path d="M1209.8 321.7 C1209.8 317.3 1215.2 317.3 1215.2 321.7 Q1218.8 337.4 1220.1 359.0 C1220.6 363.4 1223.5 367.2 1223.5 374.4 C1223.5 387.8 1221.3 392.5 1216.9 392.5 L1208.1 392.5 C1203.7 392.5 1201.5 387.8 1201.5 374.4 C1201.5 367.2 1204.4 363.4 1204.9 359.0 Q1206.2 337.4 1209.8 321.7 Z" fill="url(#tgU)"/><path d="M1209.8 321.7 C1209.8 317.3 1215.2 317.3 1215.2 321.7 Q1218.8 337.4 1220.1 359.0 C1220.6 363.4 1223.5 367.2 1223.5 374.4 C1223.5 387.8 1221.3 392.5 1216.9 392.5 L1208.1 392.5 C1203.7 392.5 1201.5 387.8 1201.5 374.4 C1201.5 367.2 1204.4 363.4 1204.9 359.0 Q1206.2 337.4 1209.8 321.7 Z" fill="url(#shade)"/>
<path d="M1249.2 322.4 C1249.2 318.3 1254.8 318.3 1254.8 322.4 Q1258.1 336.9 1259.3 356.7 C1259.8 360.8 1263.0 364.2 1263.0 370.8 C1263.0 383.2 1260.8 387.5 1256.4 387.5 L1247.6 387.5 C1243.2 387.5 1241.0 383.2 1241.0 370.8 C1241.0 364.2 1244.2 360.8 1244.7 356.7 Q1245.9 336.9 1249.2 322.4 Z" fill="url(#tgU)"/><path d="M1249.2 322.4 C1249.2 318.3 1254.8 318.3 1254.8 322.4 Q1258.1 336.9 1259.3 356.7 C1259.8 360.8 1263.0 364.2 1263.0 370.8 C1263.0 383.2 1260.8 387.5 1256.4 387.5 L1247.6 387.5 C1243.2 387.5 1241.0 383.2 1241.0 370.8 C1241.0 364.2 1244.2 360.8 1244.7 356.7 Q1245.9 336.9 1249.2 322.4 Z" fill="url(#shade)"/>
<path d="M1291.1 323.4 C1291.1 319.3 1296.9 319.3 1296.9 323.4 Q1300.4 337.6 1301.6 357.1 C1302.2 361.2 1305.5 364.6 1305.5 371.1 C1305.5 383.2 1303.2 387.5 1298.6 387.5 L1289.4 387.5 C1284.8 387.5 1282.5 383.2 1282.5 371.1 C1282.5 364.6 1285.8 361.2 1286.4 357.1 Q1287.6 337.6 1291.1 323.4 Z" fill="url(#tgU)"/><path d="M1291.1 323.4 C1291.1 319.3 1296.9 319.3 1296.9 323.4 Q1300.4 337.6 1301.6 357.1 C1302.2 361.2 1305.5 364.6 1305.5 371.1 C1305.5 383.2 1303.2 387.5 1298.6 387.5 L1289.4 387.5 C1284.8 387.5 1282.5 383.2 1282.5 371.1 C1282.5 364.6 1285.8 361.2 1286.4 357.1 Q1287.6 337.6 1291.1 323.4 Z" fill="url(#shade)"/>
<path d="M1318.6 323.3 C1318.6 319.3 1325.0 319.3 1325.3 323.3 Q1329.3 336.0 1330.8 346.6 L1332.8 346.6 Q1334.2 336.0 1337.0 325.2 C1337.0 321.3 1344.1 321.3 1344.1 325.2 Q1347.4 339.0 1346.4 356.0 C1347.1 360.0 1348.8 363.2 1348.8 369.5 C1348.8 381.4 1346.7 385.5 1341.2 385.5 L1322.8 385.5 C1317.3 385.5 1315.2 381.4 1315.2 369.5 C1315.2 363.2 1316.9 360.0 1317.6 356.0 Q1315.9 339.0 1318.6 323.3 Z" fill="url(#tgU)"/><path d="M1318.6 323.3 C1318.6 319.3 1325.0 319.3 1325.3 323.3 Q1329.3 336.0 1330.8 346.6 L1332.8 346.6 Q1334.2 336.0 1337.0 325.2 C1337.0 321.3 1344.1 321.3 1344.1 325.2 Q1347.4 339.0 1346.4 356.0 C1347.1 360.0 1348.8 363.2 1348.8 369.5 C1348.8 381.4 1346.7 385.5 1341.2 385.5 L1322.8 385.5 C1317.3 385.5 1315.2 381.4 1315.2 369.5 C1315.2 363.2 1316.9 360.0 1317.6 356.0 Q1315.9 339.0 1318.6 323.3 Z" fill="url(#shade)"/>
<path d="M1361.1 321.2 C1361.1 317.4 1367.0 317.4 1367.3 321.2 Q1371.0 333.8 1372.4 344.4 L1374.3 344.4 Q1375.5 333.8 1378.2 323.2 C1378.2 319.3 1384.7 319.3 1384.7 323.2 Q1387.8 336.9 1386.8 353.8 C1387.5 357.6 1389.0 360.9 1389.0 367.2 C1389.0 378.9 1387.1 383.0 1382.0 383.0 L1365.0 383.0 C1359.9 383.0 1358.0 378.9 1358.0 367.2 C1358.0 360.9 1359.5 357.6 1360.2 353.8 Q1358.6 336.9 1361.1 321.2 Z" fill="url(#tgU)"/><path d="M1361.1 321.2 C1361.1 317.4 1367.0 317.4 1367.3 321.2 Q1371.0 333.8 1372.4 344.4 L1374.3 344.4 Q1375.5 333.8 1378.2 323.2 C1378.2 319.3 1384.7 319.3 1384.7 323.2 Q1387.8 336.9 1386.8 353.8 C1387.5 357.6 1389.0 360.9 1389.0 367.2 C1389.0 378.9 1387.1 383.0 1382.0 383.0 L1365.0 383.0 C1359.9 383.0 1358.0 378.9 1358.0 367.2 C1358.0 360.9 1359.5 357.6 1360.2 353.8 Q1358.6 336.9 1361.1 321.2 Z" fill="url(#shade)"/>
<path d="M833.4 469.4 C833.4 473.1 839.4 473.1 839.7 469.4 Q843.5 457.2 844.9 446.9 L846.8 446.9 Q848.0 457.2 850.7 467.5 C850.7 471.2 857.3 471.2 857.3 467.5 Q860.5 454.2 859.5 437.9 C860.2 434.1 861.8 430.9 861.8 424.8 C861.8 413.5 859.9 409.5 854.7 409.5 L837.3 409.5 C832.1 409.5 830.2 413.5 830.2 424.8 C830.2 430.9 831.8 434.1 832.5 437.9 Q830.9 454.2 833.4 469.4 Z" fill="url(#tgD)"/><path d="M833.4 469.4 C833.4 473.1 839.4 473.1 839.7 469.4 Q843.5 457.2 844.9 446.9 L846.8 446.9 Q848.0 457.2 850.7 467.5 C850.7 471.2 857.3 471.2 857.3 467.5 Q860.5 454.2 859.5 437.9 C860.2 434.1 861.8 430.9 861.8 424.8 C861.8 413.5 859.9 409.5 854.7 409.5 L837.3 409.5 C832.1 409.5 830.2 413.5 830.2 424.8 C830.2 430.9 831.8 434.1 832.5 437.9 Q830.9 454.2 833.4 469.4 Z" fill="url(#shade)"/>
<path d="M874.0 469.3 C874.0 473.1 880.2 473.1 880.5 469.3 Q884.4 456.9 885.9 446.5 L887.8 446.5 Q889.1 456.9 891.9 467.4 C891.9 471.2 898.7 471.2 898.7 467.4 Q902.0 453.9 901.0 437.3 C901.6 433.5 903.2 430.3 903.2 424.1 C903.2 412.5 901.3 408.5 895.9 408.5 L878.1 408.5 C872.7 408.5 870.8 412.5 870.8 424.1 C870.8 430.3 872.4 433.5 873.0 437.3 Q871.4 453.9 874.0 469.3 Z" fill="url(#tgD)"/><path d="M874.0 469.3 C874.0 473.1 880.2 473.1 880.5 469.3 Q884.4 456.9 885.9 446.5 L887.8 446.5 Q889.1 456.9 891.9 467.4 C891.9 471.2 898.7 471.2 898.7 467.4 Q902.0 453.9 901.0 437.3 C901.6 433.5 903.2 430.3 903.2 424.1 C903.2 412.5 901.3 408.5 895.9 408.5 L878.1 408.5 C872.7 408.5 870.8 412.5 870.8 424.1 C870.8 430.3 872.4 433.5 873.0 437.3 Q871.4 453.9 874.0 469.3 Z" fill="url(#shade)"/>
<path d="M925.2 469.1 C925.2 473.2 930.8 473.2 930.8 469.1 Q934.2 454.9 935.4 435.4 C936.0 431.3 939.2 427.9 939.2 421.4 C939.2 409.3 937.0 405.0 932.5 405.0 L923.5 405.0 C919.0 405.0 916.8 409.3 916.8 421.4 C916.8 427.9 920.0 431.3 920.6 435.4 Q921.8 454.9 925.2 469.1 Z" fill="url(#tgD)"/><path d="M925.2 469.1 C925.2 473.2 930.8 473.2 930.8 469.1 Q934.2 454.9 935.4 435.4 C936.0 431.3 939.2 427.9 939.2 421.4 C939.2 409.3 937.0 405.0 932.5 405.0 L923.5 405.0 C919.0 405.0 916.8 409.3 916.8 421.4 C916.8 427.9 920.0 431.3 920.6 435.4 Q921.8 454.9 925.2 469.1 Z" fill="url(#shade)"/>
<path d="M965.3 472.5 C965.3 476.7 970.7 476.7 970.7 472.5 Q974.0 457.9 975.1 437.8 C975.6 433.6 978.8 430.1 978.8 423.4 C978.8 410.9 976.6 406.5 972.3 406.5 L963.7 406.5 C959.4 406.5 957.2 410.9 957.2 423.4 C957.2 430.1 960.4 433.6 960.9 437.8 Q962.0 457.9 965.3 472.5 Z" fill="url(#tgD)"/><path d="M965.3 472.5 C965.3 476.7 970.7 476.7 970.7 472.5 Q974.0 457.9 975.1 437.8 C975.6 433.6 978.8 430.1 978.8 423.4 C978.8 410.9 976.6 406.5 972.3 406.5 L963.7 406.5 C959.4 406.5 957.2 410.9 957.2 423.4 C957.2 430.1 960.4 433.6 960.9 437.8 Q962.0 457.9 965.3 472.5 Z" fill="url(#shade)"/>
<path d="M1006.2 475.7 C1006.2 480.3 1011.8 480.3 1011.8 475.7 Q1015.4 459.5 1016.7 437.4 C1017.3 432.8 1020.2 429.0 1020.2 421.6 C1020.2 407.8 1018.0 403.0 1013.5 403.0 L1004.5 403.0 C1000.0 403.0 997.8 407.8 997.8 421.6 C997.8 429.0 1000.7 432.8 1001.3 437.4 Q1002.6 459.5 1006.2 475.7 Z" fill="url(#tgD)"/><path d="M1006.2 475.7 C1006.2 480.3 1011.8 480.3 1011.8 475.7 Q1015.4 459.5 1016.7 437.4 C1017.3 432.8 1020.2 429.0 1020.2 421.6 C1020.2 407.8 1018.0 403.0 1013.5 403.0 L1004.5 403.0 C1000.0 403.0 997.8 407.8 997.8 421.6 C997.8 429.0 1000.7 432.8 1001.3 437.4 Q1002.6 459.5 1006.2 475.7 Z" fill="url(#shade)"/>
<path d="M1047.0 470.7 C1047.0 474.7 1052.0 474.7 1052.0 470.7 Q1054.8 456.6 1055.6 437.4 C1056.1 433.4 1059.5 430.1 1059.5 423.7 C1059.5 411.7 1057.5 407.5 1053.5 407.5 L1045.5 407.5 C1041.5 407.5 1039.5 411.7 1039.5 423.7 C1039.5 430.1 1042.9 433.4 1043.4 437.4 Q1044.2 456.6 1047.0 470.7 Z" fill="url(#tgD)"/><path d="M1047.0 470.7 C1047.0 474.7 1052.0 474.7 1052.0 470.7 Q1054.8 456.6 1055.6 437.4 C1056.1 433.4 1059.5 430.1 1059.5 423.7 C1059.5 411.7 1057.5 407.5 1053.5 407.5 L1045.5 407.5 C1041.5 407.5 1039.5 411.7 1039.5 423.7 C1039.5 430.1 1042.9 433.4 1043.4 437.4 Q1044.2 456.6 1047.0 470.7 Z" fill="url(#shade)"/>
<path d="M1089.2 471.6 C1089.2 475.7 1093.8 475.7 1093.8 471.6 Q1096.1 457.4 1096.7 437.9 C1097.2 433.8 1100.5 430.4 1100.5 423.9 C1100.5 411.8 1098.7 407.5 1095.1 407.5 L1087.9 407.5 C1084.3 407.5 1082.5 411.8 1082.5 423.9 C1082.5 430.4 1085.8 433.8 1086.3 437.9 Q1086.9 457.4 1089.2 471.6 Z" fill="url(#tgD)"/><path d="M1089.2 471.6 C1089.2 475.7 1093.8 475.7 1093.8 471.6 Q1096.1 457.4 1096.7 437.9 C1097.2 433.8 1100.5 430.4 1100.5 423.9 C1100.5 411.8 1098.7 407.5 1095.1 407.5 L1087.9 407.5 C1084.3 407.5 1082.5 411.8 1082.5 423.9 C1082.5 430.4 1085.8 433.8 1086.3 437.9 Q1086.9 457.4 1089.2 471.6 Z" fill="url(#shade)"/>
<path d="M1126.3 471.6 C1126.3 475.7 1130.7 475.7 1130.7 471.6 Q1133.0 457.5 1133.6 438.1 C1134.0 434.1 1137.2 430.8 1137.2 424.3 C1137.2 412.2 1135.5 408.0 1132.0 408.0 L1125.0 408.0 C1121.5 408.0 1119.8 412.2 1119.8 424.3 C1119.8 430.8 1123.0 434.1 1123.4 438.1 Q1124.0 457.5 1126.3 471.6 Z" fill="url(#tgD)"/><path d="M1126.3 471.6 C1126.3 475.7 1130.7 475.7 1130.7 471.6 Q1133.0 457.5 1133.6 438.1 C1134.0 434.1 1137.2 430.8 1137.2 424.3 C1137.2 412.2 1135.5 408.0 1132.0 408.0 L1125.0 408.0 C1121.5 408.0 1119.8 412.2 1119.8 424.3 C1119.8 430.8 1123.0 434.1 1123.4 438.1 Q1124.0 457.5 1126.3 471.6 Z" fill="url(#shade)"/>
<path d="M1169.1 470.7 C1169.1 474.7 1173.9 474.7 1173.9 470.7 Q1176.7 456.8 1177.4 437.7 C1177.9 433.7 1181.2 430.4 1181.2 424.1 C1181.2 412.2 1179.3 408.0 1175.4 408.0 L1167.6 408.0 C1163.7 408.0 1161.8 412.2 1161.8 424.1 C1161.8 430.4 1165.1 433.7 1165.6 437.7 Q1166.3 456.8 1169.1 470.7 Z" fill="url(#tgD)"/><path d="M1169.1 470.7 C1169.1 474.7 1173.9 474.7 1173.9 470.7 Q1176.7 456.8 1177.4 437.7 C1177.9 433.7 1181.2 430.4 1181.2 424.1 C1181.2 412.2 1179.3 408.0 1175.4 408.0 L1167.6 408.0 C1163.7 408.0 1161.8 412.2 1161.8 424.1 C1161.8 430.4 1165.1 433.7 1165.6 437.7 Q1166.3 456.8 1169.1 470.7 Z" fill="url(#shade)"/>
<path d="M1208.2 474.7 C1208.2 479.3 1213.8 479.3 1213.8 474.7 Q1217.3 458.5 1218.6 436.4 C1219.1 431.8 1222.0 428.0 1222.0 420.6 C1222.0 406.8 1219.8 402.0 1215.4 402.0 L1206.6 402.0 C1202.2 402.0 1200.0 406.8 1200.0 420.6 C1200.0 428.0 1202.9 431.8 1203.4 436.4 Q1204.7 458.5 1208.2 474.7 Z" fill="url(#tgD)"/><path d="M1208.2 474.7 C1208.2 479.3 1213.8 479.3 1213.8 474.7 Q1217.3 458.5 1218.6 436.4 C1219.1 431.8 1222.0 428.0 1222.0 420.6 C1222.0 406.8 1219.8 402.0 1215.4 402.0 L1206.6 402.0 C1202.2 402.0 1200.0 406.8 1200.0 420.6 C1200.0 428.0 1202.9 431.8 1203.4 436.4 Q1204.7 458.5 1208.2 474.7 Z" fill="url(#shade)"/>
<path d="M1249.6 472.5 C1249.6 476.7 1255.4 476.7 1255.4 472.5 Q1258.9 457.6 1260.1 437.2 C1260.7 433.0 1264.0 429.5 1264.0 422.7 C1264.0 409.9 1261.7 405.5 1257.1 405.5 L1247.9 405.5 C1243.3 405.5 1241.0 409.9 1241.0 422.7 C1241.0 429.5 1244.3 433.0 1244.9 437.2 Q1246.1 457.6 1249.6 472.5 Z" fill="url(#tgD)"/><path d="M1249.6 472.5 C1249.6 476.7 1255.4 476.7 1255.4 472.5 Q1258.9 457.6 1260.1 437.2 C1260.7 433.0 1264.0 429.5 1264.0 422.7 C1264.0 409.9 1261.7 405.5 1257.1 405.5 L1247.9 405.5 C1243.3 405.5 1241.0 409.9 1241.0 422.7 C1241.0 429.5 1244.3 433.0 1244.9 437.2 Q1246.1 457.6 1249.6 472.5 Z" fill="url(#shade)"/>
<path d="M1290.1 470.5 C1290.1 474.7 1295.9 474.7 1295.9 470.5 Q1299.4 455.9 1300.6 435.8 C1301.2 431.6 1304.5 428.1 1304.5 421.4 C1304.5 408.9 1302.2 404.5 1297.6 404.5 L1288.4 404.5 C1283.8 404.5 1281.5 408.9 1281.5 421.4 C1281.5 428.1 1284.8 431.6 1285.4 435.8 Q1286.6 455.9 1290.1 470.5 Z" fill="url(#tgD)"/><path d="M1290.1 470.5 C1290.1 474.7 1295.9 474.7 1295.9 470.5 Q1299.4 455.9 1300.6 435.8 C1301.2 431.6 1304.5 428.1 1304.5 421.4 C1304.5 408.9 1302.2 404.5 1297.6 404.5 L1288.4 404.5 C1283.8 404.5 1281.5 408.9 1281.5 421.4 C1281.5 428.1 1284.8 431.6 1285.4 435.8 Q1286.6 455.9 1290.1 470.5 Z" fill="url(#shade)"/>
<path d="M1320.6 470.7 C1320.6 474.7 1327.0 474.7 1327.3 470.7 Q1331.3 457.9 1332.8 447.2 L1334.8 447.2 Q1336.2 457.9 1339.0 468.7 C1339.0 472.7 1346.1 472.7 1346.1 468.7 Q1349.4 454.9 1348.4 437.7 C1349.1 433.7 1350.8 430.4 1350.8 424.1 C1350.8 412.2 1348.7 408.0 1343.2 408.0 L1324.8 408.0 C1319.3 408.0 1317.2 412.2 1317.2 424.1 C1317.2 430.4 1318.9 433.7 1319.6 437.7 Q1317.9 454.9 1320.6 470.7 Z" fill="url(#tgD)"/><path d="M1320.6 470.7 C1320.6 474.7 1327.0 474.7 1327.3 470.7 Q1331.3 457.9 1332.8 447.2 L1334.8 447.2 Q1336.2 457.9 1339.0 468.7 C1339.0 472.7 1346.1 472.7 1346.1 468.7 Q1349.4 454.9 1348.4 437.7 C1349.1 433.7 1350.8 430.4 1350.8 424.1 C1350.8 412.2 1348.7 408.0 1343.2 408.0 L1324.8 408.0 C1319.3 408.0 1317.2 412.2 1317.2 424.1 C1317.2 430.4 1318.9 433.7 1319.6 437.7 Q1317.9 454.9 1320.6 470.7 Z" fill="url(#shade)"/>
<path d="M1361.9 470.8 C1361.9 474.6 1367.9 474.6 1368.2 470.8 Q1372.0 458.2 1373.4 447.6 L1375.3 447.6 Q1376.5 458.2 1379.2 468.8 C1379.2 472.7 1385.8 472.7 1385.8 468.8 Q1389.0 455.1 1388.0 438.2 C1388.7 434.4 1390.2 431.1 1390.2 424.8 C1390.2 413.1 1388.4 409.0 1383.2 409.0 L1365.8 409.0 C1360.6 409.0 1358.8 413.1 1358.8 424.8 C1358.8 431.1 1360.3 434.4 1361.0 438.2 Q1359.4 455.1 1361.9 470.8 Z" fill="url(#tgD)"/><path d="M1361.9 470.8 C1361.9 474.6 1367.9 474.6 1368.2 470.8 Q1372.0 458.2 1373.4 447.6 L1375.3 447.6 Q1376.5 458.2 1379.2 468.8 C1379.2 472.7 1385.8 472.7 1385.8 468.8 Q1389.0 455.1 1388.0 438.2 C1388.7 434.4 1390.2 431.1 1390.2 424.8 C1390.2 413.1 1388.4 409.0 1383.2 409.0 L1365.8 409.0 C1360.6 409.0 1358.8 413.1 1358.8 424.8 C1358.8 431.1 1360.3 434.4 1361.0 438.2 Q1359.4 455.1 1361.9 470.8 Z" fill="url(#shade)"/>
</g>
<path d="M785 165.00 H1437.5" stroke="#707070" stroke-width="0.9" opacity="0.45"/><path d="M785 168.38 H1437.5" stroke="#707070" stroke-width="0.9" opacity="0.45"/><path d="M785 171.76 H1437.5" stroke="#707070" stroke-width="0.9" opacity="0.45"/><path d="M785 175.14 H1437.5" stroke="#707070" stroke-width="0.9" opacity="0.45"/><path d="M785 178.52 H1437.5" stroke="#707070" stroke-width="0.9" opacity="0.45"/><path d="M785 181.90 H1437.5" stroke="#707070" stroke-width="0.9" opacity="0.45"/><path d="M785 185.28 H1437.5" stroke="#707070" stroke-width="0.9" opacity="0.45"/><path d="M785 188.66 H1437.5" stroke="#707070" stroke-width="0.9" opacity="0.45"/><path d="M785 192.04 H1437.5" stroke="#707070" stroke-width="0.9" opacity="0.45"/><path d="M785 195.42 H1437.5" stroke="#707070" stroke-width="0.9" opacity="0.45"/>
<path d="M785 267.20 H1437.5" stroke="#707070" stroke-width="0.9" opacity="0.45"/><path d="M785 270.60 H1437.5" stroke="#707070" stroke-width="0.9" opacity="0.45"/><path d="M785 274.00 H1437.5" stroke="#707070" stroke-width="0.9" opacity="0.45"/><path d="M785 277.40 H1437.5" stroke="#707070" stroke-width="0.9" opacity="0.45"/><path d="M785 280.80 H1437.5" stroke="#707070" stroke-width="0.9" opacity="0.45"/><path d="M785 284.20 H1437.5" stroke="#707070" stroke-width="0.9" opacity="0.45"/><path d="M785 287.60 H1437.5" stroke="#707070" stroke-width="0.9" opacity="0.45"/><path d="M785 291.00 H1437.5" stroke="#707070" stroke-width="0.9" opacity="0.45"/><path d="M785 294.40 H1437.5" stroke="#707070" stroke-width="0.9" opacity="0.45"/><path d="M785 297.80 H1437.5" stroke="#707070" stroke-width="0.9" opacity="0.45"/>
<path d="M785 326.80 H1437.5" stroke="#707070" stroke-width="0.9" opacity="0.45"/><path d="M785 330.19 H1437.5" stroke="#707070" stroke-width="0.9" opacity="0.45"/><path d="M785 333.58 H1437.5" stroke="#707070" stroke-width="0.9" opacity="0.45"/><path d="M785 336.97 H1437.5" stroke="#707070" stroke-width="0.9" opacity="0.45"/><path d="M785 340.36 H1437.5" stroke="#707070" stroke-width="0.9" opacity="0.45"/><path d="M785 343.75 H1437.5" stroke="#707070" stroke-width="0.9" opacity="0.45"/><path d="M785 347.14 H1437.5" stroke="#707070" stroke-width="0.9" opacity="0.45"/><path d="M785 350.53 H1437.5" stroke="#707070" stroke-width="0.9" opacity="0.45"/><path d="M785 353.92 H1437.5" stroke="#707070" stroke-width="0.9" opacity="0.45"/><path d="M785 357.31 H1437.5" stroke="#707070" stroke-width="0.9" opacity="0.45"/>
<path d="M785 432.20 H1437.5" stroke="#707070" stroke-width="0.9" opacity="0.45"/><path d="M785 435.66 H1437.5" stroke="#707070" stroke-width="0.9" opacity="0.45"/><path d="M785 439.12 H1437.5" stroke="#707070" stroke-width="0.9" opacity="0.45"/><path d="M785 442.58 H1437.5" stroke="#707070" stroke-width="0.9" opacity="0.45"/><path d="M785 446.04 H1437.5" stroke="#707070" stroke-width="0.9" opacity="0.45"/><path d="M785 449.50 H1437.5" stroke="#707070" stroke-width="0.9" opacity="0.45"/><path d="M785 452.96 H1437.5" stroke="#707070" stroke-width="0.9" opacity="0.45"/><path d="M785 456.42 H1437.5" stroke="#707070" stroke-width="0.9" opacity="0.45"/><path d="M785 459.88 H1437.5" stroke="#707070" stroke-width="0.9" opacity="0.45"/><path d="M785 463.34 H1437.5" stroke="#707070" stroke-width="0.9" opacity="0.45"/>
<polyline points="791.8,195.7 822.2,195.7 835.7,175.4 852.6,178.8 863.8,185.0 875.0,187.8 890.0,186.5 904.4,192.3 917.9,191.2 929.0,176.0 942.7,181.0 957.3,175.4 982.0,181.0 999.0,175.4 1023.7,181.0 1037.0,191.0 1053.0,185.5 1066.5,187.8 1077.8,182.0 1095.8,174.3 1105.0,166.0 1116.6,155.4 1131.7,156.6 1144.5,174.7 1160.7,175.2 1172.3,179.8 1198.0,180.0 1211.7,183.3 1218.5,183.3 1226.8,195.6 1432.0,195.6" fill="none" stroke="#6a6a92" stroke-width="1.1" opacity="0.8"/>
<polyline points="791.8,195.7 822.2,195.7 833.4,178.8 849.2,178.8 862.7,191.6 875.0,186.2 888.6,187.3 904.4,190.7 917.9,186.2 942.7,191.8 957.3,186.2 978.7,191.6 999.0,191.6 1023.7,185.5 1039.5,175.0 1053.0,175.0 1077.8,181.0 1104.8,181.0 1120.0,191.4 1132.8,186.3 1159.5,191.4 1172.3,176.3 1211.7,184.5 1225.7,179.8 1244.0,181.7 1267.4,181.7 1282.5,191.4 1304.6,186.3 1323.0,188.0 1337.0,175.2 1360.3,181.7 1376.5,175.2 1391.6,179.3 1403.2,195.0 1432.0,195.0" fill="none" stroke="#2a22b0" stroke-width="1.9" stroke-linejoin="round"/>
<path d="M797.4 267.2 H1437" fill="none" stroke="#6a6a92" stroke-width="1.1" opacity="0.8" stroke="#4a46a8"/>
<polyline points="797.4,267.2 824.4,267.2 839.0,278.4 865.0,284.0 879.6,278.0 904.4,284.0 920.0,278.4 945.0,284.0 959.5,278.0 974.0,284.0 987.7,278.0 1013.6,284.0 1028.0,278.0 1054.0,284.0 1068.8,278.0 1094.7,284.0 1122.4,271.3 1136.3,277.6 1150.3,271.8 1164.2,284.5 1189.7,271.8 1204.8,284.5 1217.6,278.7 1244.2,284.5 1258.2,278.3 1284.9,284.5 1298.8,278.3 1325.5,284.5 1339.4,278.7 1366.0,284.5 1380.0,278.7 1394.0,280.6 1406.7,267.1 1436.9,267.1" fill="none" stroke="#2a22b0" stroke-width="1.9" stroke-linejoin="round"/>
<path d="M791.8 357.3 H1432" fill="none" stroke="#6a6a92" stroke-width="1.1" opacity="0.8" stroke="#4a46a8"/>
<polyline points="791.8,357.3 822.2,357.3 835.7,343.4 1348.7,343.6 1361.4,350.0 1389.3,350.0 1402.0,357.1 1432.2,357.1" fill="none" stroke="#2a22b0" stroke-width="1.9" stroke-linejoin="round"/>
<path d="M797.4 432.2 H1437" fill="none" stroke="#6a6a92" stroke-width="1.1" opacity="0.8" stroke="#4a46a8"/>
<polyline points="797.4,432.2 824.4,432.2 838.0,448.6 851.4,443.0 863.8,449.0 881.8,449.0 894.2,443.0 919.0,449.0 933.6,443.4 947.2,445.7 960.7,442.7 1000.0,442.7 1026.0,449.0 1040.6,442.7 1311.5,442.6 1327.8,438.6 1339.4,439.0 1352.2,442.6 1365.0,439.1 1392.8,438.6 1406.7,432.1 1436.9,432.1" fill="none" stroke="#2a22b0" stroke-width="1.9" stroke-linejoin="round"/>
</svg>
<div class="a" id="gs" style="left:785px;top:487px;width:298px;height:122px;background:#fdfdfd;border-right:1.5px solid #b9b9b9;border-bottom:1.5px solid #b9b9b9;box-sizing:border-box;"></div>
<div class="cb" style="left:794px;top:532.3px;width:10px;height:10px"><svg width="10" height="10" viewBox="0 0 11 11" style="display:block"><path d="M2 5.4 L4.4 8 L9 2.8" fill="none" stroke="#111" stroke-width="1.8"/></svg></div>
<div class="a" style="left:885px;top:532.5px;width:11.5px;height:11.5px;background:#1010f0;"></div>
<div class="cb" style="left:794px;top:548.5px;width:10px;height:10px"></div>
<div class="a" style="left:885px;top:548.7px;width:11.5px;height:11.5px;background:#0f7a1c;"></div>
<div class="cb" style="left:794px;top:564.0999999999999px;width:10px;height:10px"></div>
<div class="a" style="left:885px;top:564.3px;width:11.5px;height:11.5px;background:#7a1480;"></div>
<div class="cb" style="left:794px;top:580.8px;width:10px;height:10px"></div>
<div class="a" style="left:885px;top:581px;width:11.5px;height:11.5px;background:#f01018;"></div>
<div class="a" style="left:809px;top:580.5px;width:73.5px;height:13px;border:1px dotted #777;box-sizing:border-box;"></div>
<div class="a" style="left:910px;top:513px;width:74px;height:15.5px;background:#e9e9e9;border-right:1.5px solid #333;border-bottom:1.5px solid #555;box-sizing:border-box;"></div>
<div class="a" style="left:910px;top:529.5px;width:74px;height:15.5px;background:#e9e9e9;border-right:1.5px solid #333;border-bottom:1.5px solid #555;box-sizing:border-box;"></div>
<div class="a" style="left:984.5px;top:529.5px;width:33px;height:15px;background:#f6f621;"></div>
<div class="a" style="left:995px;top:514.8px;width:9px;height:9px;box-sizing:border-box;border-left:1px solid #777;border-top:1px solid #777;border-right:1px solid #ddd;border-bottom:1px solid #ddd;background:#fff;"><svg width="8" height="8" viewBox="0 0 8 8" style="display:block"><path d="M1.5 3.6 L3.2 5.6 L6.4 1.4" fill="none" stroke="#111" stroke-width="1.5"/></svg></div>
<div class="a" style="left:995px;top:532.8px;width:9px;height:9px;box-sizing:border-box;border-left:1px solid #777;border-top:1px solid #777;border-right:1px solid #ddd;border-bottom:1px solid #ddd;background:#fff;"><svg width="8" height="8" viewBox="0 0 8 8" style="display:block"><path d="M1.5 3.6 L3.2 5.6 L6.4 1.4" fill="none" stroke="#111" stroke-width="1.5"/></svg></div>
<div class="a" style="left:1038px;top:520px;width:20.5px;height:1px;background:#444;"></div>
<div class="a" style="left:1038px;top:536px;width:20.5px;height:2px;background:#222;"></div>
<div class="a" style="left:1068px;top:514px;width:13px;height:87px;background:#f8f8f8;"></div>
<div class="a" style="left:1068.5px;top:545.5px;width:12px;height:41.5px;background:#c9c9c9;"></div>
<svg class="a" style="left:1068px;top:514px" width="13" height="87" viewBox="0 0 13 87"><path d="M3.2 8 L6.5 4.6 L9.8 8" fill="none" stroke="#555" stroke-width="1.4"/><path d="M3.2 79 L6.5 82.4 L9.8 79" fill="none" stroke="#555" stroke-width="1.4"/></svg>
<div class="a" style="left:1440px;top:514px;width:25px;height:1px;background:#9c9c9c;"></div>
<!-- text -->
<span class="t" style="left:17.5px;top:7.0px;font-size:10.5px;line-height:10.5px;color:#4a4a4a;letter-spacing:-0.22px;">DentiMax - Dr. Emmett Brown DMD</span>
<span class="t" style="left:3.0px;top:27.8px;font-size:10.5px;line-height:10.5px;color:#222;letter-spacing:-0.36px;">File</span>
<span class="t" style="left:28.0px;top:27.8px;font-size:10.5px;line-height:10.5px;color:#222;letter-spacing:-0.15px;">Edit</span>
<span class="t" style="left:55.5px;top:27.8px;font-size:10.5px;line-height:10.5px;color:#222;letter-spacing:-0.22px;">Lists</span>
<span class="t" style="left:85.5px;top:27.8px;font-size:10.5px;line-height:10.5px;color:#222;letter-spacing:-0.14px;">Activities</span>
<span class="t" style="left:136.0px;top:27.8px;font-size:10.5px;line-height:10.5px;color:#222;letter-spacing:-0.15px;">Help</span>
<span class="t" style="left:137.0px;top:80.6px;font-size:18px;line-height:18px;color:#e6f0fb;letter-spacing:-0.12px;">Perio Exam on 10/23/2018 for Cotten, Laura</span>
<span class="t" style="left:2.0px;top:108.3px;font-size:11.5px;line-height:11.5px;color:#f4f7fb;font-weight:bold;letter-spacing:-0.12px;">General</span>
<span class="t" style="left:5.0px;top:124.1px;font-size:11px;line-height:11px;color:#ccd8ec;letter-spacing:-0.31px;">Save Changes</span>
<span class="t" style="left:5.0px;top:140.5px;font-size:11px;line-height:11px;color:#ccd8ec;letter-spacing:-0.31px;">Cancel Changes</span>
<span class="t" style="left:77.5px;top:126.0px;font-size:7px;line-height:7px;color:#31456e;font-weight:bold;">F7</span>
<span class="t" style="left:86.0px;top:142.3px;font-size:7px;line-height:7px;color:#31456e;font-weight:bold;">ESC</span>
<span class="t" style="left:2.0px;top:162.4px;font-size:11.5px;line-height:11.5px;color:#f4f7fb;font-weight:bold;letter-spacing:-0.16px;">Exam Info</span>
<span class="t" style="left:5.0px;top:177.5px;font-size:11px;line-height:11px;color:#ccd8ec;letter-spacing:-0.13px;">View Graph</span>
<span class="t" style="left:5.0px;top:192.9px;font-size:11px;line-height:11px;color:#ccd8ec;letter-spacing:-0.28px;">Print Exam</span>
<span class="t" style="left:2.0px;top:215.6px;font-size:11.5px;line-height:11.5px;color:#f4f7fb;font-weight:bold;letter-spacing:-0.29px;">Modify Data</span>
<span class="t" style="left:5.0px;top:231.3px;font-size:11px;line-height:11px;color:#ccd8ec;letter-spacing:-0.12px;">Copy From Previous...</span>
<span class="t" style="left:2.0px;top:252.9px;font-size:11.5px;line-height:11.5px;color:#f4f7fb;font-weight:bold;letter-spacing:-0.18px;">Other Information</span>
<span class="t" style="left:5.0px;top:267.5px;font-size:11px;line-height:11px;color:#ccd8ec;letter-spacing:-0.01px;">View Chart</span>
<span class="t" style="left:5.0px;top:283.7px;font-size:11px;line-height:11px;color:#ccd8ec;letter-spacing:-0.32px;">View PSR Exams</span>
<span class="t" style="left:5.0px;top:299.6px;font-size:11px;line-height:11px;color:#ccd8ec;letter-spacing:-0.45px;">New PSR Exam</span>
<span class="t" style="left:146.5px;top:111.1px;font-size:11px;line-height:11px;color:#3a3a3a;letter-spacing:-0.23px;">Patient:</span>
<span class="t" style="left:190.0px;top:111.0px;font-size:10.5px;line-height:10.5px;color:#3a3a3a;letter-spacing:-0.38px;">COTLA000</span>
<span class="t" style="left:283.5px;top:109.1px;font-size:11px;line-height:11px;color:#3a3a3a;letter-spacing:-0.20px;">Cotten, Laura</span>
<span class="t" style="left:139.0px;top:133.8px;font-size:11px;line-height:11px;color:#3a3a3a;letter-spacing:-0.11px;">Provider:</span>
<span class="t" style="left:189.0px;top:132.0px;font-size:10px;line-height:10px;color:#3a3a3a;letter-spacing:-0.36px;">BRO00</span>
<span class="t" style="left:283.5px;top:129.5px;font-size:11px;line-height:11px;color:#3a3a3a;letter-spacing:-0.10px;">BrownSF, Emmett</span>
<span class="t" style="left:440.5px;top:111.3px;font-size:11px;line-height:11px;color:#3a3a3a;letter-spacing:-0.16px;">Date:</span>
<span class="t" style="left:468.5px;top:110.1px;font-size:11px;line-height:11px;color:#3a3a3a;letter-spacing:0.04px;">10/23/2018</span>
<span class="t" style="left:560.5px;top:109.5px;font-size:11px;line-height:11px;color:#3a3a3a;letter-spacing:-0.09px;">Facility:</span>
<span class="t" style="left:441.0px;top:132.1px;font-size:11px;line-height:11px;color:#3a3a3a;letter-spacing:-0.10px;">Movement:</span>
<span class="t" style="left:497.0px;top:131.5px;font-size:11px;line-height:11px;color:#3a3a3a;letter-spacing:-0.13px;">B,L 1-16, then B,L 32-17</span>
<span class="t" style="left:655.5px;top:132.8px;font-size:11px;line-height:11px;color:#3a3a3a;letter-spacing:-0.17px;">Mark Bleeding after PD</span>
<span class="t" style="left:131.5px;top:154.3px;font-size:7.5px;line-height:7.5px;color:#3a3a3a;">Plaque</span>
<span class="t" style="left:131.5px;top:162.6px;font-size:7.5px;line-height:7.5px;color:#3a3a3a;">Mobility</span>
<span class="t" style="left:131.5px;top:173.8px;font-size:7.5px;line-height:7.5px;color:#3a3a3a;">Bone Loss</span>
<span class="t" style="left:131.5px;top:181.8px;font-size:7.5px;line-height:7.5px;color:#3a3a3a;">MGD</span>
<span class="t" style="left:131.5px;top:192.3px;font-size:7.5px;line-height:7.5px;color:#3a3a3a;">CAL</span>
<span class="t" style="left:131.5px;top:201.1px;font-size:7.5px;line-height:7.5px;color:#3a3a3a;">GM</span>
<span class="t" style="left:131.5px;top:210.3px;font-size:7.5px;line-height:7.5px;color:#3a3a3a;">PD</span>
<span class="t" style="left:131.5px;top:234.6px;font-size:7.5px;line-height:7.5px;color:#3a3a3a;">Furcation</span>
<span class="t" style="left:131.5px;top:258.8px;font-size:7.5px;line-height:7.5px;color:#3a3a3a;">PD</span>
<span class="t" style="left:131.5px;top:267.8px;font-size:7.5px;line-height:7.5px;color:#3a3a3a;">GM</span>
<span class="t" style="left:131.5px;top:277.3px;font-size:7.5px;line-height:7.5px;color:#3a3a3a;">CAL</span>
<span class="t" style="left:205.0px;top:153.8px;font-size:8.5px;line-height:8.5px;color:#3c3c3c;letter-spacing:0.11px;">Light</span>
<span class="t" style="left:218.0px;top:162.1px;font-size:8.5px;line-height:8.5px;color:#3c3c3c;">II</span>
<span class="t" style="left:205.0px;top:173.1px;font-size:8.5px;line-height:8.5px;color:#d6405f;letter-spacing:-0.22px;">Sev</span>
<span class="t" style="left:208.0px;top:181.5px;font-size:8.5px;line-height:8.5px;color:#3c3c3c;letter-spacing:-0.61px;">MGD</span>
<span class="t" style="left:208.1px;top:191.4px;font-size:9.5px;line-height:9.5px;color:#d6405f;">7</span>
<span class="t" style="left:216.8px;top:191.4px;font-size:9.5px;line-height:9.5px;color:#d6405f;">7</span>
<span class="t" style="left:225.5px;top:191.4px;font-size:9.5px;line-height:9.5px;color:#3c3c3c;">2</span>
<span class="t" style="left:208.1px;top:200.4px;font-size:9.5px;line-height:9.5px;color:#3c3c3c;">2</span>
<span class="t" style="left:216.8px;top:200.4px;font-size:9.5px;line-height:9.5px;color:#3c3c3c;">2</span>
<span class="t" style="left:225.5px;top:200.4px;font-size:9.5px;line-height:9.5px;color:#3c3c3c;">1</span>
<span class="t" style="left:208.1px;top:209.4px;font-size:9.5px;line-height:9.5px;color:#d6405f;">5</span>
<span class="t" style="left:216.8px;top:209.4px;font-size:9.5px;line-height:9.5px;color:#d6405f;">5</span>
<span class="t" style="left:225.5px;top:209.4px;font-size:9.5px;line-height:9.5px;color:#3c3c3c;">1</span>
<span class="t" style="left:208.1px;top:257.9px;font-size:9.5px;line-height:9.5px;color:#3c3c3c;">3</span>
<span class="t" style="left:216.8px;top:257.9px;font-size:9.5px;line-height:9.5px;color:#d6405f;">4</span>
<span class="t" style="left:225.5px;top:257.9px;font-size:9.5px;line-height:9.5px;color:#d6405f;">5</span>
<span class="t" style="left:216.2px;top:290.1px;font-size:9px;line-height:9px;color:#2a2a2a;font-weight:bold;">2</span>
<span class="t" style="left:238.9px;top:191.4px;font-size:9.5px;line-height:9.5px;color:#d6405f;">4</span>
<span class="t" style="left:247.6px;top:191.4px;font-size:9.5px;line-height:9.5px;color:#d6405f;">3</span>
<span class="t" style="left:256.3px;top:191.4px;font-size:9.5px;line-height:9.5px;color:#3c3c3c;">2</span>
<span class="t" style="left:238.9px;top:200.4px;font-size:9.5px;line-height:9.5px;color:#3c3c3c;">1</span>
<span class="t" style="left:247.6px;top:200.4px;font-size:9.5px;line-height:9.5px;color:#3c3c3c;">1</span>
<span class="t" style="left:256.3px;top:200.4px;font-size:9.5px;line-height:9.5px;color:#3c3c3c;">1</span>
<span class="t" style="left:238.9px;top:209.4px;font-size:9.5px;line-height:9.5px;color:#3c3c3c;">3</span>
<span class="t" style="left:247.6px;top:209.4px;font-size:9.5px;line-height:9.5px;color:#3c3c3c;">2</span>
<span class="t" style="left:256.3px;top:209.4px;font-size:9.5px;line-height:9.5px;color:#3c3c3c;">1</span>
<span class="t" style="left:238.9px;top:257.9px;font-size:9.5px;line-height:9.5px;color:#3c3c3c;">3</span>
<span class="t" style="left:247.6px;top:257.9px;font-size:9.5px;line-height:9.5px;color:#d6405f;">4</span>
<span class="t" style="left:256.3px;top:257.9px;font-size:9.5px;line-height:9.5px;color:#d6405f;">5</span>
<span class="t" style="left:246.9px;top:290.1px;font-size:9px;line-height:9px;color:#2a2a2a;font-weight:bold;">3</span>
<span class="t" style="left:269.6px;top:191.4px;font-size:9.5px;line-height:9.5px;color:#d6405f;">6</span>
<span class="t" style="left:278.3px;top:191.4px;font-size:9.5px;line-height:9.5px;color:#d6405f;">5</span>
<span class="t" style="left:287.0px;top:191.4px;font-size:9.5px;line-height:9.5px;color:#d6405f;">4</span>
<span class="t" style="left:269.6px;top:200.4px;font-size:9.5px;line-height:9.5px;color:#3c3c3c;">3</span>
<span class="t" style="left:278.3px;top:200.4px;font-size:9.5px;line-height:9.5px;color:#3c3c3c;">3</span>
<span class="t" style="left:287.0px;top:200.4px;font-size:9.5px;line-height:9.5px;color:#3c3c3c;">3</span>
<span class="t" style="left:269.6px;top:209.4px;font-size:9.5px;line-height:9.5px;color:#3c3c3c;">3</span>
<span class="t" style="left:278.3px;top:209.4px;font-size:9.5px;line-height:9.5px;color:#3c3c3c;">2</span>
<span class="t" style="left:287.0px;top:209.4px;font-size:9.5px;line-height:9.5px;color:#3c3c3c;">1</span>
<span class="t" style="left:269.6px;top:257.9px;font-size:9.5px;line-height:9.5px;color:#3c3c3c;">3</span>
<span class="t" style="left:278.3px;top:257.9px;font-size:9.5px;line-height:9.5px;color:#d6405f;">4</span>
<span class="t" style="left:287.0px;top:257.9px;font-size:9.5px;line-height:9.5px;color:#d6405f;">5</span>
<span class="t" style="left:277.6px;top:290.1px;font-size:9px;line-height:9px;color:#2a2a2a;font-weight:bold;">4</span>
<span class="t" style="left:300.3px;top:191.4px;font-size:9.5px;line-height:9.5px;color:#d6405f;">6</span>
<span class="t" style="left:309.0px;top:191.4px;font-size:9.5px;line-height:9.5px;color:#d6405f;">4</span>
<span class="t" style="left:317.7px;top:191.4px;font-size:9.5px;line-height:9.5px;color:#d6405f;">3</span>
<span class="t" style="left:300.3px;top:200.4px;font-size:9.5px;line-height:9.5px;color:#3c3c3c;">3</span>
<span class="t" style="left:309.0px;top:200.4px;font-size:9.5px;line-height:9.5px;color:#3c3c3c;">2</span>
<span class="t" style="left:317.7px;top:200.4px;font-size:9.5px;line-height:9.5px;color:#3c3c3c;">2</span>
<span class="t" style="left:300.3px;top:209.4px;font-size:9.5px;line-height:9.5px;color:#3c3c3c;">3</span>
<span class="t" style="left:309.0px;top:209.4px;font-size:9.5px;line-height:9.5px;color:#3c3c3c;">2</span>
<span class="t" style="left:317.7px;top:209.4px;font-size:9.5px;line-height:9.5px;color:#3c3c3c;">1</span>
<span class="t" style="left:300.3px;top:257.9px;font-size:9.5px;line-height:9.5px;color:#3c3c3c;">3</span>
<span class="t" style="left:309.0px;top:257.9px;font-size:9.5px;line-height:9.5px;color:#d6405f;">5</span>
<span class="t" style="left:317.7px;top:257.9px;font-size:9.5px;line-height:9.5px;color:#3c3c3c;">3</span>
<span class="t" style="left:308.4px;top:290.1px;font-size:9px;line-height:9px;color:#2a2a2a;font-weight:bold;">5</span>
<span class="t" style="left:331.0px;top:191.4px;font-size:9.5px;line-height:9.5px;color:#d6405f;">3</span>
<span class="t" style="left:339.7px;top:191.4px;font-size:9.5px;line-height:9.5px;color:#d6405f;">4</span>
<span class="t" style="left:348.4px;top:191.4px;font-size:9.5px;line-height:9.5px;color:#d6405f;">5</span>
<span class="t" style="left:331.0px;top:200.4px;font-size:9.5px;line-height:9.5px;color:#3c3c3c;">2</span>
<span class="t" style="left:339.7px;top:200.4px;font-size:9.5px;line-height:9.5px;color:#3c3c3c;">2</span>
<span class="t" style="left:348.4px;top:200.4px;font-size:9.5px;line-height:9.5px;color:#3c3c3c;">2</span>
<span class="t" style="left:331.0px;top:209.4px;font-size:9.5px;line-height:9.5px;color:#3c3c3c;">1</span>
<span class="t" style="left:339.7px;top:209.4px;font-size:9.5px;line-height:9.5px;color:#3c3c3c;">2</span>
<span class="t" style="left:348.4px;top:209.4px;font-size:9.5px;line-height:9.5px;color:#3c3c3c;">3</span>
<span class="t" style="left:331.0px;top:257.9px;font-size:9.5px;line-height:9.5px;color:#d6405f;">4</span>
<span class="t" style="left:339.7px;top:257.9px;font-size:9.5px;line-height:9.5px;color:#d6405f;">5</span>
<span class="t" style="left:348.4px;top:257.9px;font-size:9.5px;line-height:9.5px;color:#3c3c3c;">3</span>
<span class="t" style="left:339.1px;top:290.1px;font-size:9px;line-height:9px;color:#2a2a2a;font-weight:bold;">6</span>
<span class="t" style="left:361.7px;top:191.4px;font-size:9.5px;line-height:9.5px;color:#d6405f;">8</span>
<span class="t" style="left:370.4px;top:191.4px;font-size:9.5px;line-height:9.5px;color:#d6405f;">8</span>
<span class="t" style="left:379.1px;top:191.4px;font-size:9.5px;line-height:9.5px;color:#d6405f;">7</span>
<span class="t" style="left:361.7px;top:200.4px;font-size:9.5px;line-height:9.5px;color:#3c3c3c;">2</span>
<span class="t" style="left:370.4px;top:200.4px;font-size:9.5px;line-height:9.5px;color:#3c3c3c;">2</span>
<span class="t" style="left:379.1px;top:200.4px;font-size:9.5px;line-height:9.5px;color:#3c3c3c;">2</span>
<span class="t" style="left:361.7px;top:209.4px;font-size:9.5px;line-height:9.5px;color:#d6405f;">6</span>
<span class="t" style="left:370.4px;top:209.4px;font-size:9.5px;line-height:9.5px;color:#d6405f;">6</span>
<span class="t" style="left:379.1px;top:209.4px;font-size:9.5px;line-height:9.5px;color:#d6405f;">5</span>
<span class="t" style="left:361.7px;top:257.9px;font-size:9.5px;line-height:9.5px;color:#d6405f;">4</span>
<span class="t" style="left:370.4px;top:257.9px;font-size:9.5px;line-height:9.5px;color:#d6405f;">5</span>
<span class="t" style="left:379.1px;top:257.9px;font-size:9.5px;line-height:9.5px;color:#3c3c3c;">3</span>
<span class="t" style="left:369.8px;top:290.1px;font-size:9px;line-height:9px;color:#2a2a2a;font-weight:bold;">7</span>
<span class="t" style="left:392.5px;top:191.4px;font-size:9.5px;line-height:9.5px;color:#d6405f;">6</span>
<span class="t" style="left:401.2px;top:191.4px;font-size:9.5px;line-height:9.5px;color:#d6405f;">5</span>
<span class="t" style="left:409.9px;top:191.4px;font-size:9.5px;line-height:9.5px;color:#d6405f;">5</span>
<span class="t" style="left:392.5px;top:200.4px;font-size:9.5px;line-height:9.5px;color:#3c3c3c;">2</span>
<span class="t" style="left:401.2px;top:200.4px;font-size:9.5px;line-height:9.5px;color:#3c3c3c;">1</span>
<span class="t" style="left:409.9px;top:200.4px;font-size:9.5px;line-height:9.5px;color:#3c3c3c;">1</span>
<span class="t" style="left:392.5px;top:209.4px;font-size:9.5px;line-height:9.5px;color:#d6405f;">4</span>
<span class="t" style="left:401.2px;top:209.4px;font-size:9.5px;line-height:9.5px;color:#d6405f;">4</span>
<span class="t" style="left:409.9px;top:209.4px;font-size:9.5px;line-height:9.5px;color:#d6405f;">4</span>
<span class="t" style="left:392.5px;top:257.9px;font-size:9.5px;line-height:9.5px;color:#d6405f;">4</span>
<span class="t" style="left:401.2px;top:257.9px;font-size:9.5px;line-height:9.5px;color:#d6405f;">5</span>
<span class="t" style="left:409.9px;top:257.9px;font-size:9.5px;line-height:9.5px;color:#3c3c3c;">3</span>
<span class="t" style="left:400.5px;top:290.1px;font-size:9px;line-height:9px;color:#2a2a2a;font-weight:bold;">8</span>
<span class="t" style="left:423.2px;top:191.4px;font-size:9.5px;line-height:9.5px;color:#3c3c3c;">2</span>
<span class="t" style="left:431.9px;top:191.4px;font-size:9.5px;line-height:9.5px;color:#d6405f;">4</span>
<span class="t" style="left:440.6px;top:191.4px;font-size:9.5px;line-height:9.5px;color:#d6405f;">3</span>
<span class="t" style="left:423.2px;top:200.4px;font-size:9.5px;line-height:9.5px;color:#3c3c3c;">1</span>
<span class="t" style="left:431.9px;top:200.4px;font-size:9.5px;line-height:9.5px;color:#3c3c3c;">1</span>
<span class="t" style="left:440.6px;top:200.4px;font-size:9.5px;line-height:9.5px;color:#3c3c3c;">1</span>
<span class="t" style="left:423.2px;top:209.4px;font-size:9.5px;line-height:9.5px;color:#3c3c3c;">1</span>
<span class="t" style="left:431.9px;top:209.4px;font-size:9.5px;line-height:9.5px;color:#3c3c3c;">3</span>
<span class="t" style="left:440.6px;top:209.4px;font-size:9.5px;line-height:9.5px;color:#3c3c3c;">2</span>
<span class="t" style="left:423.2px;top:257.9px;font-size:9.5px;line-height:9.5px;color:#3c3c3c;">1</span>
<span class="t" style="left:431.9px;top:257.9px;font-size:9.5px;line-height:9.5px;color:#3c3c3c;">3</span>
<span class="t" style="left:440.6px;top:257.9px;font-size:9.5px;line-height:9.5px;color:#3c3c3c;">1</span>
<span class="t" style="left:431.2px;top:290.1px;font-size:9px;line-height:9px;color:#2a2a2a;font-weight:bold;">9</span>
<span class="t" style="left:453.9px;top:191.4px;font-size:9.5px;line-height:9.5px;color:#3c3c3c;">2</span>
<span class="t" style="left:462.6px;top:191.4px;font-size:9.5px;line-height:9.5px;color:#d6405f;">7</span>
<span class="t" style="left:471.3px;top:191.4px;font-size:9.5px;line-height:9.5px;color:#d6405f;">6</span>
<span class="t" style="left:453.9px;top:200.4px;font-size:9.5px;line-height:9.5px;color:#3c3c3c;">1</span>
<span class="t" style="left:462.6px;top:200.4px;font-size:9.5px;line-height:9.5px;color:#3c3c3c;">1</span>
<span class="t" style="left:471.3px;top:200.4px;font-size:9.5px;line-height:9.5px;color:#3c3c3c;">1</span>
<span class="t" style="left:453.9px;top:209.4px;font-size:9.5px;line-height:9.5px;color:#3c3c3c;">1</span>
<span class="t" style="left:462.6px;top:209.4px;font-size:9.5px;line-height:9.5px;color:#d6405f;">6</span>
<span class="t" style="left:471.3px;top:209.4px;font-size:9.5px;line-height:9.5px;color:#d6405f;">5</span>
<span class="t" style="left:453.9px;top:257.9px;font-size:9.5px;line-height:9.5px;color:#d6405f;">5</span>
<span class="t" style="left:462.6px;top:257.9px;font-size:9.5px;line-height:9.5px;color:#3c3c3c;">2</span>
<span class="t" style="left:471.3px;top:257.9px;font-size:9.5px;line-height:9.5px;color:#3c3c3c;">1</span>
<span class="t" style="left:462.0px;top:290.1px;font-size:9px;line-height:9px;color:#2a2a2a;font-weight:bold;">10</span>
<span class="t" style="left:484.6px;top:191.4px;font-size:9.5px;line-height:9.5px;color:#d6405f;">5</span>
<span class="t" style="left:493.3px;top:191.4px;font-size:9.5px;line-height:9.5px;color:#d6405f;">4</span>
<span class="t" style="left:502.0px;top:191.4px;font-size:9.5px;line-height:9.5px;color:#d6405f;">6</span>
<span class="t" style="left:484.6px;top:200.4px;font-size:9.5px;line-height:9.5px;color:#3c3c3c;">1</span>
<span class="t" style="left:493.3px;top:200.4px;font-size:9.5px;line-height:9.5px;color:#3c3c3c;">1</span>
<span class="t" style="left:502.0px;top:200.4px;font-size:9.5px;line-height:9.5px;color:#3c3c3c;">1</span>
<span class="t" style="left:484.6px;top:209.4px;font-size:9.5px;line-height:9.5px;color:#d6405f;">4</span>
<span class="t" style="left:493.3px;top:209.4px;font-size:9.5px;line-height:9.5px;color:#3c3c3c;">3</span>
<span class="t" style="left:502.0px;top:209.4px;font-size:9.5px;line-height:9.5px;color:#d6405f;">5</span>
<span class="t" style="left:484.6px;top:257.9px;font-size:9.5px;line-height:9.5px;color:#d6405f;">5</span>
<span class="t" style="left:493.3px;top:257.9px;font-size:9.5px;line-height:9.5px;color:#3c3c3c;">3</span>
<span class="t" style="left:502.0px;top:257.9px;font-size:9.5px;line-height:9.5px;color:#d6405f;">4</span>
<span class="t" style="left:492.7px;top:290.1px;font-size:9px;line-height:9px;color:#2a2a2a;font-weight:bold;">11</span>
<span class="t" style="left:515.3px;top:191.4px;font-size:9.5px;line-height:9.5px;color:#d6405f;">5</span>
<span class="t" style="left:524.0px;top:191.4px;font-size:9.5px;line-height:9.5px;color:#d6405f;">5</span>
<span class="t" style="left:532.7px;top:191.4px;font-size:9.5px;line-height:9.5px;color:#d6405f;">5</span>
<span class="t" style="left:515.3px;top:200.4px;font-size:9.5px;line-height:9.5px;color:#3c3c3c;">1</span>
<span class="t" style="left:524.0px;top:200.4px;font-size:9.5px;line-height:9.5px;color:#3c3c3c;">1</span>
<span class="t" style="left:532.7px;top:200.4px;font-size:9.5px;line-height:9.5px;color:#3c3c3c;">1</span>
<span class="t" style="left:515.3px;top:209.4px;font-size:9.5px;line-height:9.5px;color:#d6405f;">4</span>
<span class="t" style="left:524.0px;top:209.4px;font-size:9.5px;line-height:9.5px;color:#d6405f;">4</span>
<span class="t" style="left:532.7px;top:209.4px;font-size:9.5px;line-height:9.5px;color:#d6405f;">4</span>
<span class="t" style="left:515.3px;top:257.9px;font-size:9.5px;line-height:9.5px;color:#d6405f;">5</span>
<span class="t" style="left:524.0px;top:257.9px;font-size:9.5px;line-height:9.5px;color:#3c3c3c;">3</span>
<span class="t" style="left:532.7px;top:257.9px;font-size:9.5px;line-height:9.5px;color:#d6405f;">4</span>
<span class="t" style="left:523.4px;top:290.1px;font-size:9px;line-height:9px;color:#2a2a2a;font-weight:bold;">12</span>
<span class="t" style="left:546.1px;top:191.4px;font-size:9.5px;line-height:9.5px;color:#3c3c3c;">2</span>
<span class="t" style="left:554.8px;top:191.4px;font-size:9.5px;line-height:9.5px;color:#d6405f;">3</span>
<span class="t" style="left:563.5px;top:191.4px;font-size:9.5px;line-height:9.5px;color:#d6405f;">4</span>
<span class="t" style="left:546.1px;top:200.4px;font-size:9.5px;line-height:9.5px;color:#3c3c3c;">1</span>
<span class="t" style="left:554.8px;top:200.4px;font-size:9.5px;line-height:9.5px;color:#3c3c3c;">1</span>
<span class="t" style="left:563.5px;top:200.4px;font-size:9.5px;line-height:9.5px;color:#3c3c3c;">1</span>
<span class="t" style="left:546.1px;top:209.4px;font-size:9.5px;line-height:9.5px;color:#3c3c3c;">1</span>
<span class="t" style="left:554.8px;top:209.4px;font-size:9.5px;line-height:9.5px;color:#3c3c3c;">2</span>
<span class="t" style="left:563.5px;top:209.4px;font-size:9.5px;line-height:9.5px;color:#3c3c3c;">3</span>
<span class="t" style="left:546.1px;top:257.9px;font-size:9.5px;line-height:9.5px;color:#d6405f;">5</span>
<span class="t" style="left:554.8px;top:257.9px;font-size:9.5px;line-height:9.5px;color:#3c3c3c;">3</span>
<span class="t" style="left:563.5px;top:257.9px;font-size:9.5px;line-height:9.5px;color:#d6405f;">4</span>
<span class="t" style="left:554.8px;top:267.1px;font-size:9.5px;line-height:9.5px;color:#3c3c3c;">1</span>
<span class="t" style="left:563.5px;top:267.1px;font-size:9.5px;line-height:9.5px;color:#3c3c3c;">2</span>
<span class="t" style="left:554.8px;top:276.4px;font-size:9.5px;line-height:9.5px;color:#d6405f;">4</span>
<span class="t" style="left:563.5px;top:276.4px;font-size:9.5px;line-height:9.5px;color:#d6405f;">6</span>
<span class="t" style="left:554.1px;top:290.1px;font-size:9px;line-height:9px;color:#2a2a2a;font-weight:bold;">13</span>
<span class="t" style="left:576.8px;top:191.4px;font-size:9.5px;line-height:9.5px;color:#d6405f;">3</span>
<span class="t" style="left:585.5px;top:191.4px;font-size:9.5px;line-height:9.5px;color:#d6405f;">7</span>
<span class="t" style="left:594.2px;top:191.4px;font-size:9.5px;line-height:9.5px;color:#d6405f;">6</span>
<span class="t" style="left:576.8px;top:200.4px;font-size:9.5px;line-height:9.5px;color:#3c3c3c;">1</span>
<span class="t" style="left:585.5px;top:200.4px;font-size:9.5px;line-height:9.5px;color:#3c3c3c;">1</span>
<span class="t" style="left:594.2px;top:200.4px;font-size:9.5px;line-height:9.5px;color:#3c3c3c;">1</span>
<span class="t" style="left:576.8px;top:209.4px;font-size:9.5px;line-height:9.5px;color:#3c3c3c;">2</span>
<span class="t" style="left:585.5px;top:209.4px;font-size:9.5px;line-height:9.5px;color:#d6405f;">6</span>
<span class="t" style="left:594.2px;top:209.4px;font-size:9.5px;line-height:9.5px;color:#d6405f;">5</span>
<span class="t" style="left:576.8px;top:257.9px;font-size:9.5px;line-height:9.5px;color:#d6405f;">5</span>
<span class="t" style="left:585.5px;top:257.9px;font-size:9.5px;line-height:9.5px;color:#3c3c3c;">3</span>
<span class="t" style="left:594.2px;top:257.9px;font-size:9.5px;line-height:9.5px;color:#d6405f;">4</span>
<span class="t" style="left:576.8px;top:267.1px;font-size:9.5px;line-height:9.5px;color:#3c3c3c;">1</span>
<span class="t" style="left:585.5px;top:267.1px;font-size:9.5px;line-height:9.5px;color:#3c3c3c;">2</span>
<span class="t" style="left:594.2px;top:267.1px;font-size:9.5px;line-height:9.5px;color:#3c3c3c;">1</span>
<span class="t" style="left:576.8px;top:276.4px;font-size:9.5px;line-height:9.5px;color:#d6405f;">6</span>
<span class="t" style="left:585.5px;top:276.4px;font-size:9.5px;line-height:9.5px;color:#d6405f;">5</span>
<span class="t" style="left:594.2px;top:276.4px;font-size:9.5px;line-height:9.5px;color:#d6405f;">5</span>
<span class="t" style="left:584.8px;top:290.1px;font-size:9px;line-height:9px;color:#2a2a2a;font-weight:bold;">14</span>
<span class="t" style="left:607.5px;top:191.4px;font-size:9.5px;line-height:9.5px;color:#d6405f;">5</span>
<span class="t" style="left:616.2px;top:191.4px;font-size:9.5px;line-height:9.5px;color:#d6405f;">8</span>
<span class="t" style="left:624.9px;top:191.4px;font-size:9.5px;line-height:9.5px;color:#d6405f;">6</span>
<span class="t" style="left:607.5px;top:200.4px;font-size:9.5px;line-height:9.5px;color:#3c3c3c;">1</span>
<span class="t" style="left:616.2px;top:200.4px;font-size:9.5px;line-height:9.5px;color:#3c3c3c;">2</span>
<span class="t" style="left:624.9px;top:200.4px;font-size:9.5px;line-height:9.5px;color:#3c3c3c;">1</span>
<span class="t" style="left:607.5px;top:209.4px;font-size:9.5px;line-height:9.5px;color:#d6405f;">4</span>
<span class="t" style="left:616.2px;top:209.4px;font-size:9.5px;line-height:9.5px;color:#d6405f;">6</span>
<span class="t" style="left:624.9px;top:209.4px;font-size:9.5px;line-height:9.5px;color:#d6405f;">5</span>
<span class="t" style="left:607.5px;top:257.9px;font-size:9.5px;line-height:9.5px;color:#d6405f;">5</span>
<span class="t" style="left:616.2px;top:257.9px;font-size:9.5px;line-height:9.5px;color:#3c3c3c;">3</span>
<span class="t" style="left:624.9px;top:257.9px;font-size:9.5px;line-height:9.5px;color:#d6405f;">4</span>
<span class="t" style="left:607.5px;top:267.1px;font-size:9.5px;line-height:9.5px;color:#3c3c3c;">2</span>
<span class="t" style="left:616.2px;top:267.1px;font-size:9.5px;line-height:9.5px;color:#3c3c3c;">1</span>
<span class="t" style="left:624.9px;top:267.1px;font-size:9.5px;line-height:9.5px;color:#3c3c3c;">2</span>
<span class="t" style="left:607.5px;top:276.4px;font-size:9.5px;line-height:9.5px;color:#d6405f;">7</span>
<span class="t" style="left:616.2px;top:276.4px;font-size:9.5px;line-height:9.5px;color:#d6405f;">4</span>
<span class="t" style="left:624.9px;top:276.4px;font-size:9.5px;line-height:9.5px;color:#d6405f;">6</span>
<span class="t" style="left:615.6px;top:290.1px;font-size:9px;line-height:9px;color:#2a2a2a;font-weight:bold;">15</span>
<span class="t" style="left:139.9px;top:318.7px;font-size:10.5px;line-height:10.5px;color:#444;">1</span>
<span class="t" style="left:160.1px;top:318.7px;font-size:10.5px;line-height:10.5px;color:#444;">2</span>
<span class="t" style="left:180.3px;top:318.7px;font-size:10.5px;line-height:10.5px;color:#444;">3</span>
<span class="t" style="left:139.9px;top:338.1px;font-size:10.5px;line-height:10.5px;color:#444;">6</span>
<span class="t" style="left:160.1px;top:338.1px;font-size:10.5px;line-height:10.5px;color:#444;">5</span>
<span class="t" style="left:180.3px;top:338.1px;font-size:10.5px;line-height:10.5px;color:#444;">4</span>
<span class="t" style="left:213.5px;top:320.4px;font-size:9.5px;line-height:9.5px;color:#3a3a3a;letter-spacing:-0.44px;">Bleeding</span>
<span class="t" style="left:213.5px;top:337.9px;font-size:9.5px;line-height:9.5px;color:#3a3a3a;letter-spacing:-0.25px;">Suppuration</span>
<span class="t" style="left:287.5px;top:315.7px;font-size:9px;line-height:9px;color:#3a3a3a;letter-spacing:-1.01px;">PD</span>
<span class="t" style="left:287.5px;top:328.3px;font-size:9px;line-height:9px;color:#3a3a3a;letter-spacing:-1.00px;">GM</span>
<span class="t" style="left:287.5px;top:340.7px;font-size:9px;line-height:9px;color:#3a3a3a;letter-spacing:-0.51px;">CAL</span>
<span class="t" style="left:316.5px;top:316.4px;font-size:9.5px;line-height:9.5px;color:#3a3a3a;letter-spacing:-0.28px;">Probing Depths</span>
<span class="t" style="left:321.5px;top:335.7px;font-size:10.5px;line-height:10.5px;color:#3a3a3a;">5</span>
<span class="t" style="left:348.5px;top:335.7px;font-size:10.5px;line-height:10.5px;color:#3a3a3a;">4</span>
<span class="t" style="left:376.5px;top:335.7px;font-size:10.5px;line-height:10.5px;color:#3a3a3a;">3</span>
<span class="t" style="left:413.5px;top:318.4px;font-size:9.5px;line-height:9.5px;color:#3a3a3a;letter-spacing:-0.07px;">Furcation:</span>
<span class="t" style="left:425.0px;top:336.2px;font-size:9.5px;line-height:9.5px;color:#3a3a3a;letter-spacing:-0.32px;">Plaque:</span>
<span class="t" style="left:558.5px;top:319.1px;font-size:9.5px;line-height:9.5px;color:#3a3a3a;letter-spacing:-0.20px;">Mobility:</span>
<span class="t" style="left:596.0px;top:316.7px;font-size:10.5px;line-height:10.5px;color:#3a3a3a;">0</span>
<span class="t" style="left:645.7px;top:319.5px;font-size:8.5px;line-height:8.5px;color:#3a3a3a;letter-spacing:-0.78px;">MGD</span>
<span class="t" style="left:548.0px;top:338.4px;font-size:9.5px;line-height:9.5px;color:#3a3a3a;letter-spacing:-0.40px;">Bone Loss:</span>
<span class="t" style="left:131.5px;top:356.3px;font-size:7.5px;line-height:7.5px;color:#3a3a3a;">Plaque</span>
<span class="t" style="left:133.0px;top:365.8px;font-size:7.5px;line-height:7.5px;color:#3a3a3a;">Mobility</span>
<span class="t" style="left:131.5px;top:376.0px;font-size:7.5px;line-height:7.5px;color:#3a3a3a;">Bone Loss</span>
<span class="t" style="left:131.5px;top:384.5px;font-size:7.5px;line-height:7.5px;color:#3a3a3a;">CAL</span>
<span class="t" style="left:131.5px;top:394.8px;font-size:7.5px;line-height:7.5px;color:#3a3a3a;">GM</span>
<span class="t" style="left:131.5px;top:403.6px;font-size:7.5px;line-height:7.5px;color:#3a3a3a;">PD</span>
<span class="t" style="left:131.5px;top:427.3px;font-size:7.5px;line-height:7.5px;color:#3a3a3a;">Furcation</span>
<span class="t" style="left:131.5px;top:451.0px;font-size:7.5px;line-height:7.5px;color:#3a3a3a;">PD</span>
<span class="t" style="left:131.5px;top:462.3px;font-size:7.5px;line-height:7.5px;color:#3a3a3a;">GM</span>
<span class="t" style="left:131.5px;top:470.6px;font-size:7.5px;line-height:7.5px;color:#3a3a3a;">CAL</span>
<span class="t" style="left:132.5px;top:479.8px;font-size:7.5px;line-height:7.5px;color:#3a3a3a;">MGD</span>
<span class="t" style="left:209.8px;top:402.3px;font-size:9.5px;line-height:9.5px;color:#d6405f;">4</span>
<span class="t" style="left:218.5px;top:402.3px;font-size:9.5px;line-height:9.5px;color:#d6405f;">4</span>
<span class="t" style="left:227.2px;top:402.3px;font-size:9.5px;line-height:9.5px;color:#d6405f;">4</span>
<span class="t" style="left:209.8px;top:451.2px;font-size:9.5px;line-height:9.5px;color:#d6405f;">5</span>
<span class="t" style="left:218.5px;top:451.2px;font-size:9.5px;line-height:9.5px;color:#3c3c3c;">3</span>
<span class="t" style="left:227.2px;top:451.2px;font-size:9.5px;line-height:9.5px;color:#d6405f;">5</span>
<span class="t" style="left:217.1px;top:492.7px;font-size:9px;line-height:9px;color:#2a2a2a;font-weight:bold;">31</span>
<span class="t" style="left:240.4px;top:402.3px;font-size:9.5px;line-height:9.5px;color:#d6405f;">4</span>
<span class="t" style="left:249.1px;top:402.3px;font-size:9.5px;line-height:9.5px;color:#d6405f;">4</span>
<span class="t" style="left:257.8px;top:402.3px;font-size:9.5px;line-height:9.5px;color:#d6405f;">4</span>
<span class="t" style="left:240.4px;top:451.2px;font-size:9.5px;line-height:9.5px;color:#d6405f;">4</span>
<span class="t" style="left:249.1px;top:451.2px;font-size:9.5px;line-height:9.5px;color:#3c3c3c;">3</span>
<span class="t" style="left:257.8px;top:451.2px;font-size:9.5px;line-height:9.5px;color:#d6405f;">5</span>
<span class="t" style="left:247.7px;top:492.7px;font-size:9px;line-height:9px;color:#2a2a2a;font-weight:bold;">30</span>
<span class="t" style="left:271.0px;top:402.3px;font-size:9.5px;line-height:9.5px;color:#d6405f;">4</span>
<span class="t" style="left:279.7px;top:402.3px;font-size:9.5px;line-height:9.5px;color:#d6405f;">4</span>
<span class="t" style="left:288.4px;top:402.3px;font-size:9.5px;line-height:9.5px;color:#d6405f;">4</span>
<span class="t" style="left:271.0px;top:451.2px;font-size:9.5px;line-height:9.5px;color:#d6405f;">4</span>
<span class="t" style="left:279.7px;top:451.2px;font-size:9.5px;line-height:9.5px;color:#3c3c3c;">3</span>
<span class="t" style="left:288.4px;top:451.2px;font-size:9.5px;line-height:9.5px;color:#d6405f;">5</span>
<span class="t" style="left:278.3px;top:492.7px;font-size:9px;line-height:9px;color:#2a2a2a;font-weight:bold;">29</span>
<span class="t" style="left:301.6px;top:402.3px;font-size:9.5px;line-height:9.5px;color:#d6405f;">4</span>
<span class="t" style="left:310.3px;top:402.3px;font-size:9.5px;line-height:9.5px;color:#d6405f;">4</span>
<span class="t" style="left:319.0px;top:402.3px;font-size:9.5px;line-height:9.5px;color:#d6405f;">4</span>
<span class="t" style="left:301.6px;top:451.2px;font-size:9.5px;line-height:9.5px;color:#3c3c3c;">3</span>
<span class="t" style="left:310.3px;top:451.2px;font-size:9.5px;line-height:9.5px;color:#3c3c3c;">3</span>
<span class="t" style="left:319.0px;top:451.2px;font-size:9.5px;line-height:9.5px;color:#3c3c3c;">3</span>
<span class="t" style="left:308.9px;top:492.7px;font-size:9px;line-height:9px;color:#2a2a2a;font-weight:bold;">28</span>
<span class="t" style="left:332.2px;top:402.3px;font-size:9.5px;line-height:9.5px;color:#d6405f;">4</span>
<span class="t" style="left:340.9px;top:402.3px;font-size:9.5px;line-height:9.5px;color:#d6405f;">4</span>
<span class="t" style="left:349.6px;top:402.3px;font-size:9.5px;line-height:9.5px;color:#d6405f;">4</span>
<span class="t" style="left:332.2px;top:451.2px;font-size:9.5px;line-height:9.5px;color:#d6405f;">5</span>
<span class="t" style="left:340.9px;top:451.2px;font-size:9.5px;line-height:9.5px;color:#d6405f;">4</span>
<span class="t" style="left:349.6px;top:451.2px;font-size:9.5px;line-height:9.5px;color:#3c3c3c;">3</span>
<span class="t" style="left:339.5px;top:492.7px;font-size:9px;line-height:9px;color:#2a2a2a;font-weight:bold;">27</span>
<span class="t" style="left:362.8px;top:402.3px;font-size:9.5px;line-height:9.5px;color:#d6405f;">4</span>
<span class="t" style="left:371.5px;top:402.3px;font-size:9.5px;line-height:9.5px;color:#d6405f;">4</span>
<span class="t" style="left:380.2px;top:402.3px;font-size:9.5px;line-height:9.5px;color:#d6405f;">4</span>
<span class="t" style="left:362.8px;top:451.2px;font-size:9.5px;line-height:9.5px;color:#3c3c3c;">3</span>
<span class="t" style="left:371.5px;top:451.2px;font-size:9.5px;line-height:9.5px;color:#3c3c3c;">3</span>
<span class="t" style="left:380.2px;top:451.2px;font-size:9.5px;line-height:9.5px;color:#3c3c3c;">3</span>
<span class="t" style="left:370.1px;top:492.7px;font-size:9px;line-height:9px;color:#2a2a2a;font-weight:bold;">26</span>
<span class="t" style="left:393.4px;top:402.3px;font-size:9.5px;line-height:9.5px;color:#d6405f;">4</span>
<span class="t" style="left:402.1px;top:402.3px;font-size:9.5px;line-height:9.5px;color:#d6405f;">4</span>
<span class="t" style="left:410.8px;top:402.3px;font-size:9.5px;line-height:9.5px;color:#d6405f;">4</span>
<span class="t" style="left:393.4px;top:451.2px;font-size:9.5px;line-height:9.5px;color:#3c3c3c;">3</span>
<span class="t" style="left:402.1px;top:451.2px;font-size:9.5px;line-height:9.5px;color:#3c3c3c;">3</span>
<span class="t" style="left:410.8px;top:451.2px;font-size:9.5px;line-height:9.5px;color:#3c3c3c;">3</span>
<span class="t" style="left:400.7px;top:492.7px;font-size:9px;line-height:9px;color:#2a2a2a;font-weight:bold;">25</span>
<span class="t" style="left:424.0px;top:402.3px;font-size:9.5px;line-height:9.5px;color:#d6405f;">4</span>
<span class="t" style="left:432.7px;top:402.3px;font-size:9.5px;line-height:9.5px;color:#d6405f;">4</span>
<span class="t" style="left:441.4px;top:402.3px;font-size:9.5px;line-height:9.5px;color:#d6405f;">4</span>
<span class="t" style="left:424.0px;top:451.2px;font-size:9.5px;line-height:9.5px;color:#3c3c3c;">3</span>
<span class="t" style="left:432.7px;top:451.2px;font-size:9.5px;line-height:9.5px;color:#3c3c3c;">3</span>
<span class="t" style="left:441.4px;top:451.2px;font-size:9.5px;line-height:9.5px;color:#3c3c3c;">3</span>
<span class="t" style="left:431.3px;top:492.7px;font-size:9px;line-height:9px;color:#2a2a2a;font-weight:bold;">24</span>
<span class="t" style="left:454.6px;top:402.3px;font-size:9.5px;line-height:9.5px;color:#d6405f;">4</span>
<span class="t" style="left:463.3px;top:402.3px;font-size:9.5px;line-height:9.5px;color:#d6405f;">4</span>
<span class="t" style="left:472.0px;top:402.3px;font-size:9.5px;line-height:9.5px;color:#d6405f;">4</span>
<span class="t" style="left:454.6px;top:451.2px;font-size:9.5px;line-height:9.5px;color:#3c3c3c;">3</span>
<span class="t" style="left:463.3px;top:451.2px;font-size:9.5px;line-height:9.5px;color:#3c3c3c;">3</span>
<span class="t" style="left:472.0px;top:451.2px;font-size:9.5px;line-height:9.5px;color:#3c3c3c;">3</span>
<span class="t" style="left:461.9px;top:492.7px;font-size:9px;line-height:9px;color:#2a2a2a;font-weight:bold;">23</span>
<span class="t" style="left:485.2px;top:402.3px;font-size:9.5px;line-height:9.5px;color:#d6405f;">4</span>
<span class="t" style="left:493.9px;top:402.3px;font-size:9.5px;line-height:9.5px;color:#d6405f;">4</span>
<span class="t" style="left:502.6px;top:402.3px;font-size:9.5px;line-height:9.5px;color:#d6405f;">4</span>
<span class="t" style="left:485.2px;top:451.2px;font-size:9.5px;line-height:9.5px;color:#3c3c3c;">3</span>
<span class="t" style="left:493.9px;top:451.2px;font-size:9.5px;line-height:9.5px;color:#3c3c3c;">3</span>
<span class="t" style="left:502.6px;top:451.2px;font-size:9.5px;line-height:9.5px;color:#3c3c3c;">3</span>
<span class="t" style="left:492.5px;top:492.7px;font-size:9px;line-height:9px;color:#2a2a2a;font-weight:bold;">22</span>
<span class="t" style="left:515.8px;top:402.3px;font-size:9.5px;line-height:9.5px;color:#d6405f;">4</span>
<span class="t" style="left:524.5px;top:402.3px;font-size:9.5px;line-height:9.5px;color:#d6405f;">4</span>
<span class="t" style="left:533.2px;top:402.3px;font-size:9.5px;line-height:9.5px;color:#d6405f;">4</span>
<span class="t" style="left:515.8px;top:451.2px;font-size:9.5px;line-height:9.5px;color:#3c3c3c;">3</span>
<span class="t" style="left:524.5px;top:451.2px;font-size:9.5px;line-height:9.5px;color:#3c3c3c;">3</span>
<span class="t" style="left:533.2px;top:451.2px;font-size:9.5px;line-height:9.5px;color:#3c3c3c;">3</span>
<span class="t" style="left:523.1px;top:492.7px;font-size:9px;line-height:9px;color:#2a2a2a;font-weight:bold;">21</span>
<span class="t" style="left:546.4px;top:402.3px;font-size:9.5px;line-height:9.5px;color:#d6405f;">4</span>
<span class="t" style="left:555.1px;top:402.3px;font-size:9.5px;line-height:9.5px;color:#d6405f;">4</span>
<span class="t" style="left:563.8px;top:402.3px;font-size:9.5px;line-height:9.5px;color:#d6405f;">4</span>
<span class="t" style="left:546.4px;top:451.2px;font-size:9.5px;line-height:9.5px;color:#3c3c3c;">3</span>
<span class="t" style="left:555.1px;top:451.2px;font-size:9.5px;line-height:9.5px;color:#3c3c3c;">3</span>
<span class="t" style="left:563.8px;top:451.2px;font-size:9.5px;line-height:9.5px;color:#3c3c3c;">3</span>
<span class="t" style="left:553.7px;top:492.7px;font-size:9px;line-height:9px;color:#2a2a2a;font-weight:bold;">20</span>
<span class="t" style="left:577.0px;top:402.3px;font-size:9.5px;line-height:9.5px;color:#d6405f;">4</span>
<span class="t" style="left:585.7px;top:402.3px;font-size:9.5px;line-height:9.5px;color:#d6405f;">4</span>
<span class="t" style="left:594.4px;top:402.3px;font-size:9.5px;line-height:9.5px;color:#d6405f;">4</span>
<span class="t" style="left:577.0px;top:451.2px;font-size:9.5px;line-height:9.5px;color:#3c3c3c;">3</span>
<span class="t" style="left:585.7px;top:451.2px;font-size:9.5px;line-height:9.5px;color:#3c3c3c;">2</span>
<span class="t" style="left:594.4px;top:451.2px;font-size:9.5px;line-height:9.5px;color:#3c3c3c;">2</span>
<span class="t" style="left:584.3px;top:492.7px;font-size:9px;line-height:9px;color:#2a2a2a;font-weight:bold;">19</span>
<span class="t" style="left:607.6px;top:402.3px;font-size:9.5px;line-height:9.5px;color:#3c3c3c;">2</span>
<span class="t" style="left:616.3px;top:402.3px;font-size:9.5px;line-height:9.5px;color:#3c3c3c;">2</span>
<span class="t" style="left:625.0px;top:402.3px;font-size:9.5px;line-height:9.5px;color:#3c3c3c;">2</span>
<span class="t" style="left:607.6px;top:451.2px;font-size:9.5px;line-height:9.5px;color:#3c3c3c;">2</span>
<span class="t" style="left:616.3px;top:451.2px;font-size:9.5px;line-height:9.5px;color:#3c3c3c;">2</span>
<span class="t" style="left:625.0px;top:451.2px;font-size:9.5px;line-height:9.5px;color:#3c3c3c;">2</span>
<span class="t" style="left:614.9px;top:492.7px;font-size:9px;line-height:9px;color:#2a2a2a;font-weight:bold;">18</span>
<span class="t" style="left:133.5px;top:518.8px;font-size:10.5px;line-height:10.5px;color:#3a3a3a;letter-spacing:-0.06px;">Notes:</span>
<span class="t" style="left:177.0px;top:518.8px;font-size:10.5px;line-height:10.5px;color:#3a3a3a;letter-spacing:0.15px;">generalized blleding &amp; inflammation throughout mouth. Gave OHI</span>
<span class="t" style="left:720.1px;top:382.0px;font-size:10px;line-height:10px;color:#4a4a4a;">B</span>
<span class="t" style="left:743.8px;top:382.0px;font-size:10px;line-height:10px;color:#4a4a4a;">S</span>
<span class="t" style="left:696.2px;top:406.3px;font-size:10px;line-height:10px;color:#4a4a4a;">1</span>
<span class="t" style="left:720.0px;top:406.3px;font-size:10px;line-height:10px;color:#4a4a4a;">2</span>
<span class="t" style="left:744.2px;top:406.3px;font-size:10px;line-height:10px;color:#4a4a4a;">3</span>
<span class="t" style="left:696.2px;top:429.2px;font-size:10px;line-height:10px;color:#4a4a4a;">4</span>
<span class="t" style="left:720.0px;top:429.2px;font-size:10px;line-height:10px;color:#4a4a4a;">5</span>
<span class="t" style="left:744.2px;top:429.2px;font-size:10px;line-height:10px;color:#4a4a4a;">6</span>
<span class="t" style="left:696.2px;top:451.5px;font-size:10px;line-height:10px;color:#4a4a4a;">7</span>
<span class="t" style="left:720.0px;top:451.5px;font-size:10px;line-height:10px;color:#4a4a4a;">8</span>
<span class="t" style="left:744.2px;top:451.5px;font-size:10px;line-height:10px;color:#4a4a4a;">9</span>
<span class="t" style="left:693.4px;top:475.0px;font-size:10px;line-height:10px;color:#4a4a4a;">10</span>
<span class="t" style="left:717.2px;top:475.0px;font-size:10px;line-height:10px;color:#4a4a4a;">11</span>
<span class="t" style="left:741.4px;top:475.0px;font-size:10px;line-height:10px;color:#4a4a4a;">12</span>
<span class="t" style="left:693.4px;top:498.5px;font-size:10px;line-height:10px;color:#4a4a4a;">13</span>
<span class="t" style="left:717.2px;top:498.5px;font-size:10px;line-height:10px;color:#4a4a4a;">14</span>
<span class="t" style="left:741.4px;top:498.5px;font-size:10px;line-height:10px;color:#4a4a4a;">15</span>
<span class="t" style="left:792.0px;top:126.8px;font-size:17.5px;line-height:17.5px;color:#e3eefb;letter-spacing:-0.12px;">Perio Graph</span>
<span class="t" style="left:791.0px;top:493.9px;font-size:16px;line-height:16px;color:#161616;font-weight:bold;font-family:'Liberation Serif',serif;letter-spacing:-0.08px;">Graph Settings</span>
<span class="t" style="left:912.0px;top:500.7px;font-size:10.5px;line-height:10.5px;color:#3a3a3a;letter-spacing:-0.02px;">Exam Dates</span>
<span class="t" style="left:797.0px;top:516.0px;font-size:10.5px;line-height:10.5px;color:#3a3a3a;letter-spacing:0.09px;">Measurements</span>
<span class="t" style="left:811.3px;top:534.0px;font-size:10.5px;line-height:10.5px;color:#3a3a3a;letter-spacing:-0.08px;">Show PD</span>
<span class="t" style="left:811.3px;top:550.2px;font-size:10.5px;line-height:10.5px;color:#3a3a3a;letter-spacing:-0.13px;">Show GM</span>
<span class="t" style="left:811.3px;top:565.8px;font-size:10.5px;line-height:10.5px;color:#3a3a3a;letter-spacing:-0.11px;">Show CAL</span>
<span class="t" style="left:811.3px;top:582.5px;font-size:10.5px;line-height:10.5px;color:#3a3a3a;letter-spacing:-0.03px;">Show Bleeding</span>
<span class="t" style="left:912.0px;top:516.5px;font-size:10.5px;line-height:10.5px;color:#3a3a3a;letter-spacing:0.31px;">7/26/2020</span>
<span class="t" style="left:912.0px;top:533.0px;font-size:10.5px;line-height:10.5px;color:#3a3a3a;letter-spacing:0.29px;">10/23/2018</span>
</div></div></body></html>
